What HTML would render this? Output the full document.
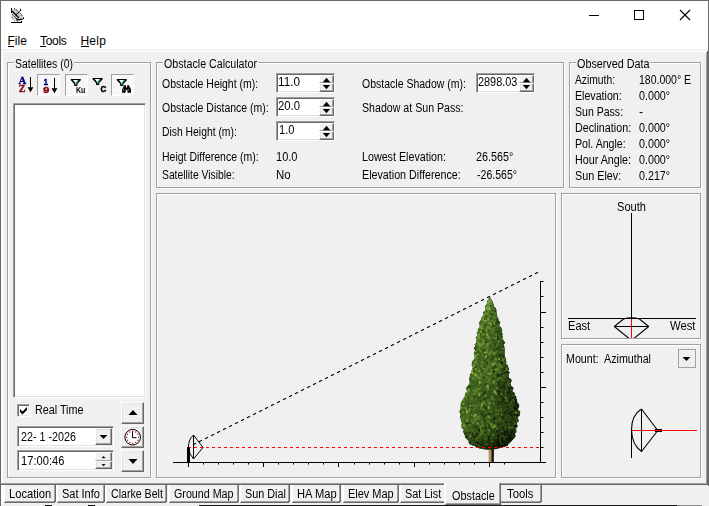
<!DOCTYPE html>
<html><head><meta charset="utf-8"><title>Obstacle</title>
<style>
html,body{margin:0;padding:0}
body{width:709px;height:506px;background:#f0f0f0;position:relative;overflow:hidden;font-family:"Liberation Sans",sans-serif;font-size:12px;color:#000}
.a{position:absolute}
.t{position:absolute;white-space:pre;line-height:20px;font-size:12px;transform-origin:0 0;display:block}
.m{position:absolute;white-space:pre;line-height:20px;font-size:12px;top:31px}
.etch{position:absolute;box-sizing:border-box;border:1px solid #a0a0a0;box-shadow:1px 1px 0 #fff, inset 1px 1px 0 #fff}
.cap{position:absolute;background:#f0f0f0;height:3px;top:61px}
.sunk{position:absolute;box-sizing:border-box;background:#fff;border:1px solid;border-color:#a0a0a0 #fff #fff #a0a0a0;box-shadow:inset 1px 1px 0 #696969, inset -1px -1px 0 #e3e3e3}
.btn{position:absolute;box-sizing:border-box;background:#f0f0f0;border:1px solid;border-color:#fff #696969 #696969 #fff;box-shadow:inset -1px -1px 0 #a0a0a0, inset 1px 1px 0 #e3e3e3}
.chk{position:absolute;box-sizing:border-box;border:1px solid;border-color:#a0a0a0 #fff #fff #a0a0a0;background:repeating-conic-gradient(#fff 0 25%,#f0f0f0 0 50%) 0 0/2px 2px}
.tab{position:absolute;box-sizing:border-box;top:485px;height:18px;background:#f0f0f0;border-left:2px solid #fff;border-right:1px solid #696969;border-bottom:1px solid #696969;box-shadow:inset -1px -1px 0 #a0a0a0}
svg{position:absolute;left:0;top:0;overflow:visible}
</style></head>
<body>
<!-- window chrome -->
<div class="a" style="left:0;top:0;width:709px;height:49px;background:#fff"></div>
<div class="a" style="left:0;top:0;width:709px;height:1px;background:#686868"></div>
<div class="a" style="left:0;top:1px;width:1px;height:505px;background:#686868"></div>
<div class="a" style="left:708px;top:1px;width:1px;height:485px;background:#686868"></div>
<div class="a" style="left:199px;top:505px;width:478px;height:1px;background:#1c1c1c"></div><div class="a" style="left:677px;top:505px;width:25px;height:1px;background:#8a8a8a"></div><div class="a" style="left:45px;top:505px;width:7px;height:1px;background:#111"></div><div class="a" style="left:88px;top:505px;width:7px;height:1px;background:#111"></div>

<!-- tab control frame -->
<div class="a" style="left:1px;top:51px;width:706px;height:1px;background:#fff"></div>
<div class="a" style="left:1px;top:51px;width:2px;height:454px;background:#fff"></div>
<div class="a" style="left:706px;top:52px;width:1px;height:432px;background:#a0a0a0"></div>
<div class="a" style="left:707px;top:51px;width:1px;height:434px;background:#696969"></div>
<div class="a" style="left:1px;top:483px;width:706px;height:1px;background:#a0a0a0"></div>
<div class="a" style="left:1px;top:484px;width:707px;height:1px;background:#696969"></div>

<!-- caption buttons -->
<svg width="709" height="506" viewBox="0 0 709 506" shape-rendering="crispEdges">
 <rect x="589" y="15" width="10" height="1" fill="#000"/>
 <rect x="634.5" y="10.5" width="9" height="9" fill="none" stroke="#000" stroke-width="1"/>
 <g shape-rendering="auto" stroke="#000" stroke-width="1.1"><path d="M680 10 L690 20 M690 10 L680 20" fill="none"/></g>
</svg>

<!-- app icon -->
<svg width="709" height="506" viewBox="0 0 709 506">
 <path d="M12 9.5 L15 8.6 L20.5 13 L24 18.2 L21.5 19.8 L17 19.6 L13.5 18.5 L11.5 15.5 Z" fill="#c4c4c4"/>
 <g stroke="#000" stroke-width="1" fill="none">
  <path d="M11.5 8 V13"/>
  <path d="M14 8.4 L19.8 12.2 M20.6 13.4 L23.8 18.2" stroke-dasharray="1.1 1.1"/>
  <path d="M12 11 L18.8 17.7" stroke-width="1.2"/>
  <path d="M12.4 14.4 L16.6 18.5 M11.4 16.8 L14.6 20.5" stroke-dasharray="1.2 0.9"/>
  <path d="M19.6 11.6 L15.6 15"/>
  <path d="M20.5 8.8 V11.2" stroke-width="1.1"/>
  <path d="M15.8 18.5 Q18 20.4 21 19.4 L23.8 18.4" stroke-width="1.3"/>
  <path d="M16.6 20 L17.6 21.6"/>
  <path d="M11 22.5 H22 M21.5 21 V22.5" stroke-width="1.2"/>
 </g>
 <circle cx="22.2" cy="17.7" r="0.9" fill="#fff"/>
</svg>

<!-- menu -->
<span class="m" style="left:7.5px">File</span>
<span class="m" style="left:40px;letter-spacing:-0.3px">Tools</span>
<span class="m" style="left:80.4px;letter-spacing:0.3px">Help</span>
<div class="a" style="left:8px;top:46px;width:6px;height:1px;background:#000"></div>
<div class="a" style="left:40px;top:46px;width:6px;height:1px;background:#000"></div>
<div class="a" style="left:81px;top:46px;width:8px;height:1px;background:#000"></div>

<!-- group boxes / panels -->
<div class="etch" style="left:7px;top:62px;width:144px;height:416px"></div>
<div class="etch" style="left:156px;top:62px;width:408px;height:126px"></div>
<div class="etch" style="left:569px;top:62px;width:132px;height:126px"></div>
<div class="etch" style="left:156px;top:193px;width:400px;height:285px"></div>
<div class="etch" style="left:561px;top:193px;width:140px;height:146px"></div>
<div class="etch" style="left:561px;top:344px;width:140px;height:134px"></div>
<div class="cap" style="left:14px;width:60px"></div>
<div class="cap" style="left:163px;width:95px"></div>
<div class="cap" style="left:576px;width:74px"></div>

<!-- toolbar -->
<div class="chk" style="left:37px;top:74px;width:23px;height:22px"></div>
<div class="chk" style="left:65px;top:74px;width:23px;height:22px"></div>
<div class="chk" style="left:111px;top:74px;width:23px;height:22px"></div>
<svg width="709" height="506" viewBox="0 0 709 506" style="transform:translateZ(0);will-change:transform">
 <!-- AZ -->
 <g font-family="Liberation Serif" font-weight="bold" font-size="11px" stroke-width="0.35">
  <text x="18.6" y="84" fill="#000080" stroke="#000080" textLength="7.8" lengthAdjust="spacingAndGlyphs">A</text>
  <text x="18.8" y="92.2" fill="#800000" stroke="#800000" textLength="6.8" lengthAdjust="spacingAndGlyphs">Z</text>
 </g>
 <g shape-rendering="crispEdges"><rect x="30" y="77" width="1" height="13" fill="#000"/></g>
 <path d="M27.6 87.2 L33.4 87.2 L30.5 92.2 Z" fill="#000"/>
 <!-- 19 -->
 <g font-family="Liberation Sans" font-weight="bold" font-size="9.7px" stroke-width="0.35">
  <text x="43.6" y="85" fill="#000080" stroke="#000080" textLength="4.6" lengthAdjust="spacingAndGlyphs">1</text>
  <text x="42.9" y="93.2" fill="#800000" stroke="#800000" textLength="6.4" lengthAdjust="spacingAndGlyphs">9</text>
 </g>
 <g shape-rendering="crispEdges"><rect x="54" y="78" width="1" height="13" fill="#000"/></g>
 <path d="M51.6 88.2 L57.4 88.2 L54.5 93.2 Z" fill="#000"/>
 <!-- funnel Ku -->
 <path d="M70.8 79.0 h10 v1.2 l-3.4 3.8 v2 h-3.2 v-2 l-3.4 -3.8 Z" fill="#000"/><path d="M73.0 80.1 h5.6 l-2.2 2.9 v1.5 h-1.2 v-1.5 Z" fill="#fff"/><path d="M78.2 80.4 L75.4 84.4" stroke="#009090" stroke-width="1.1" fill="none"/>
 <text x="76" y="92.8" font-family="Liberation Sans" font-weight="bold" font-size="8.5px" textLength="9.4" lengthAdjust="spacingAndGlyphs">Ku</text>
 <!-- funnel C -->
 <path d="M92.6 78.0 h10 v1.2 l-3.4 3.8 v2 h-3.2 v-2 l-3.4 -3.8 Z" fill="#000"/><path d="M94.8 79.1 h5.6 l-2.2 2.9 v1.5 h-1.2 v-1.5 Z" fill="#fff"/><path d="M100.0 79.4 L97.2 83.4" stroke="#009090" stroke-width="1.1" fill="none"/>
 <text x="100.6" y="92" font-family="Liberation Sans" font-weight="bold" font-size="8.6px" stroke="#000" stroke-width="0.5" textLength="5.8" lengthAdjust="spacingAndGlyphs">C</text>
 <!-- funnel binoculars -->
 <path d="M116.8 79.0 h10 v1.2 l-3.4 3.8 v2 h-3.2 v-2 l-3.4 -3.8 Z" fill="#000"/><path d="M119.0 80.1 h5.6 l-2.2 2.9 v1.5 h-1.2 v-1.5 Z" fill="#fff"/><path d="M124.2 80.4 L121.4 84.4" stroke="#009090" stroke-width="1.1" fill="none"/>
 <g fill="#000">
  <path d="M124.2 85.2 H126 V87.4 L125.5 92.8 H122.1 V89.4 L123.4 87 Z"/>
  <path d="M128.9 85.2 H127.1 V87.4 L127.6 92.8 H131 V89.4 L129.7 87 Z"/>
  <rect x="125.2" y="87.4" width="2.7" height="2.4"/>
 </g>
 <rect x="123.1" y="89.3" width="0.8" height="1" fill="#fff"/><rect x="128.3" y="89.3" width="0.8" height="1" fill="#fff"/>
</svg>

<!-- list box -->
<div class="sunk" style="left:13px;top:103px;width:133px;height:295px"></div>

<!-- checkbox -->
<div class="sunk" style="left:17px;top:404px;width:13px;height:13px"></div>
<svg width="709" height="506" viewBox="0 0 709 506"><path d="M20 409 L22.5 411.5 L27 407 V410 L22.5 414.5 L20 412 Z" fill="#000"/></svg>

<!-- date / time -->
<div class="sunk" style="left:17px;top:426px;width:97px;height:21px"></div>
<div class="btn" style="left:95px;top:428px;width:17px;height:17px"></div>
<div class="sunk" style="left:17px;top:450px;width:97px;height:21px"></div>
<div class="btn" style="left:95px;top:452px;width:17px;height:9px;border-bottom-color:#a0a0a0;box-shadow:inset -1px 0 0 #a0a0a0"></div>
<div class="btn" style="left:95px;top:461px;width:17px;height:8px"></div>
<div class="btn" style="left:121px;top:402px;width:23px;height:22px"></div>
<div class="btn" style="left:121px;top:426px;width:23px;height:22px"></div>
<div class="btn" style="left:121px;top:450px;width:23px;height:22px"></div>
<svg width="709" height="506" viewBox="0 0 709 506">
 <path d="M99.5 435 L107.5 435 L103.5 439 Z" fill="#000"/>
 <path d="M101.5 458.2 L105.5 458.2 L103.5 456 Z" fill="#000"/>
 <path d="M101.5 464 L105.5 464 L103.5 466.2 Z" fill="#000"/>
 <path d="M128.5 415 L137.5 415 L133 410 Z" fill="#000"/>
 <path d="M128.5 459 L137.5 459 L133 464 Z" fill="#000"/>
 <circle cx="132.7" cy="437.2" r="7.8" fill="#fff" stroke="#000" stroke-width="1"/>
 <g fill="#b80000">
  <circle cx="132.7" cy="431.2" r="0.7"/><circle cx="135.7" cy="432" r="0.7"/><circle cx="137.9" cy="434.2" r="0.7"/>
  <circle cx="138.7" cy="437.2" r="0.7"/><circle cx="137.9" cy="440.2" r="0.7"/><circle cx="135.7" cy="442.4" r="0.7"/>
  <circle cx="132.7" cy="443.2" r="0.7"/><circle cx="129.7" cy="442.4" r="0.7"/><circle cx="127.5" cy="440.2" r="0.7"/>
  <circle cx="126.7" cy="437.2" r="0.7"/><circle cx="127.5" cy="434.2" r="0.7"/><circle cx="129.7" cy="432" r="0.7"/>
 </g>
 <path d="M132.5 431.5 L132.5 437.7 L136.5 437.7" fill="none" stroke="#000" stroke-width="1"/>
</svg>

<!-- spin boxes -->
<div class="sunk" style="left:276px;top:73px;width:59px;height:20px"></div>
<div class="sunk" style="left:276px;top:97px;width:59px;height:20px"></div>
<div class="sunk" style="left:276px;top:121px;width:59px;height:20px"></div>
<div class="sunk" style="left:476px;top:73px;width:59px;height:20px"></div>
<div class="btn" style="left:319px;top:75px;width:15px;height:8px;border-bottom-color:#a0a0a0;box-shadow:inset -1px 0 0 #a0a0a0"></div>
<div class="btn" style="left:319px;top:83px;width:15px;height:9px"></div>
<svg width="709" height="506" viewBox="0 0 709 506"><path d="M322.8 82.2 L330.2 82.2 L326.5 77.8 Z" fill="#000"/><path d="M322.8 85.0 L330.2 85.0 L326.5 89.2 Z" fill="#000"/></svg>
<div class="btn" style="left:319px;top:99px;width:15px;height:8px;border-bottom-color:#a0a0a0;box-shadow:inset -1px 0 0 #a0a0a0"></div>
<div class="btn" style="left:319px;top:107px;width:15px;height:9px"></div>
<svg width="709" height="506" viewBox="0 0 709 506"><path d="M322.8 106.2 L330.2 106.2 L326.5 101.8 Z" fill="#000"/><path d="M322.8 109.0 L330.2 109.0 L326.5 113.2 Z" fill="#000"/></svg>
<div class="btn" style="left:319px;top:123px;width:15px;height:8px;border-bottom-color:#a0a0a0;box-shadow:inset -1px 0 0 #a0a0a0"></div>
<div class="btn" style="left:319px;top:131px;width:15px;height:9px"></div>
<svg width="709" height="506" viewBox="0 0 709 506"><path d="M322.8 130.2 L330.2 130.2 L326.5 125.8 Z" fill="#000"/><path d="M322.8 133.0 L330.2 133.0 L326.5 137.2 Z" fill="#000"/></svg>
<div class="btn" style="left:519px;top:75px;width:15px;height:8px;border-bottom-color:#a0a0a0;box-shadow:inset -1px 0 0 #a0a0a0"></div>
<div class="btn" style="left:519px;top:83px;width:15px;height:9px"></div>
<svg width="709" height="506" viewBox="0 0 709 506"><path d="M522.8 82.2 L530.2 82.2 L526.5 77.8 Z" fill="#000"/><path d="M522.8 85.0 L530.2 85.0 L526.5 89.2 Z" fill="#000"/></svg>

<!-- mount dropdown -->
<div class="a" style="left:678px;top:349px;width:18px;height:19px;box-sizing:border-box;border:1px solid #a0a0a0;background:#f0f0f0"></div>
<svg width="709" height="506" viewBox="0 0 709 506"><path d="M682.5 357 L690.5 357 L686.5 361 Z" fill="#000"/></svg>

<!-- drawing -->
<svg width="709" height="506" viewBox="0 0 709 506">
<g shape-rendering="crispEdges" fill="#000">
<rect x="173" y="462" width="373" height="1"/>
<rect x="188" y="463" width="1" height="4"/>
<rect x="263" y="463" width="1" height="4"/>
<rect x="338" y="463" width="1" height="4"/>
<rect x="414" y="463" width="1" height="4"/>
<rect x="489" y="463" width="1" height="4"/>
<rect x="540" y="281" width="1" height="182"/>
<rect x="541" y="462" width="5" height="1"/>
<rect x="541" y="387" width="5" height="1"/>
<rect x="541" y="312" width="5" height="1"/>
<rect x="187" y="447" width="3" height="15"/>
</g>
<g fill="#000"><rect x="203" y="463" width="1" height="1.5"/><rect x="218" y="463" width="1" height="1.5"/><rect x="233" y="463" width="1" height="1.5"/><rect x="248" y="463" width="1" height="1.5"/><rect x="278" y="463" width="1" height="1.5"/><rect x="293" y="463" width="1" height="1.5"/><rect x="308" y="463" width="1" height="1.5"/><rect x="323" y="463" width="1" height="1.5"/><rect x="354" y="463" width="1" height="1.5"/><rect x="369" y="463" width="1" height="1.5"/><rect x="384" y="463" width="1" height="1.5"/><rect x="399" y="463" width="1" height="1.5"/><rect x="429" y="463" width="1" height="1.5"/><rect x="444" y="463" width="1" height="1.5"/><rect x="459" y="463" width="1" height="1.5"/><rect x="474" y="463" width="1" height="1.5"/><rect x="504" y="463" width="1" height="1.5"/><rect x="541" y="447" width="2.5" height="1"/><rect x="541" y="432" width="2.5" height="1"/><rect x="541" y="417" width="2.5" height="1"/><rect x="541" y="402" width="2.5" height="1"/><rect x="541" y="372" width="2.5" height="1"/><rect x="541" y="357" width="2.5" height="1"/><rect x="541" y="342" width="2.5" height="1"/><rect x="541" y="327" width="2.5" height="1"/><rect x="541" y="296" width="2.5" height="1"/><rect x="541" y="281" width="2.5" height="1"/></g>
<defs><clipPath id="tc"><path d="M489.5 296.8 L488.8 298.5 L487.8 300.4 L487.0 302.7 L486.9 304.6 L484.6 306.6 L485.9 308.1 L485.4 310.2 L483.0 312.5 L484.2 313.9 L483.4 315.2 L482.3 316.4 L481.5 318.6 L480.5 320.4 L479.2 322.0 L479.3 324.2 L480.0 325.7 L479.2 327.8 L477.3 329.4 L479.0 330.6 L476.5 332.4 L477.1 333.7 L478.0 335.2 L475.6 337.6 L476.8 339.1 L476.2 341.2 L475.9 343.0 L474.6 344.3 L475.5 346.0 L473.7 348.4 L475.1 350.7 L473.9 352.9 L474.9 355.3 L474.3 357.4 L474.7 358.7 L473.1 360.2 L471.9 361.9 L471.8 363.8 L471.4 365.2 L473.0 366.7 L472.5 369.0 L471.0 371.3 L472.1 372.6 L470.0 374.1 L469.8 376.3 L469.1 377.7 L469.2 379.2 L469.4 381.1 L469.7 382.5 L469.2 384.3 L467.4 385.9 L466.2 387.6 L466.2 389.5 L467.5 390.9 L465.2 393.2 L465.0 394.4 L464.9 396.5 L463.8 397.8 L462.4 400.1 L461.0 402.2 L460.5 404.3 L460.5 406.0 L460.6 407.8 L460.2 409.7 L458.9 411.7 L460.6 413.8 L460.6 415.7 L459.9 417.0 L460.8 418.9 L461.0 420.9 L462.1 423.2 L461.4 424.8 L461.2 426.2 L461.7 427.9 L464.0 429.9 L462.8 432.1 L464.2 433.8 L464.9 435.1 L465.0 437.3 L466.9 438.9 L468.0 440.4 L468.8 442.4 L469.9 444.6 L474.7 445.9 L475.7 447.1 L480.2 448.7 L486.8 449.5 L492.8 449.5 L497.3 448.7 L503.5 447.1 L507.1 445.9 L508.4 444.6 L510.3 442.4 L512.1 440.4 L513.4 438.9 L515.2 437.3 L515.6 435.1 L514.7 433.8 L516.7 432.1 L516.2 429.9 L516.5 427.9 L517.8 426.2 L517.0 424.8 L516.9 423.2 L518.9 420.9 L518.1 418.9 L517.8 417.0 L520.0 415.7 L519.9 413.8 L520.4 411.7 L518.0 409.7 L518.4 407.8 L519.3 406.0 L519.0 404.3 L517.1 402.2 L517.1 400.1 L516.3 397.8 L516.4 396.5 L514.2 394.4 L515.1 393.2 L512.0 390.9 L513.1 389.5 L513.6 387.6 L511.0 385.9 L510.7 384.3 L510.5 382.5 L511.9 381.1 L511.2 379.2 L508.8 377.7 L509.0 376.3 L508.4 374.1 L509.9 372.6 L508.2 371.3 L509.1 369.0 L508.1 366.7 L508.0 365.2 L506.0 363.8 L506.5 361.9 L505.9 360.2 L506.2 358.7 L505.2 357.4 L504.8 355.3 L504.3 352.9 L505.0 350.7 L504.6 348.4 L504.3 346.0 L503.6 344.3 L505.1 343.0 L504.4 341.2 L502.7 339.1 L502.4 337.6 L502.2 335.2 L502.9 333.7 L501.6 332.4 L502.4 330.6 L502.0 329.4 L501.5 327.8 L499.0 325.7 L499.3 324.2 L500.4 322.0 L498.5 320.4 L498.5 318.6 L497.3 316.4 L496.4 315.2 L496.7 313.9 L496.5 312.5 L496.7 310.2 L495.6 308.1 L493.2 306.6 L493.6 304.6 L492.7 302.7 L491.8 300.4 L490.8 298.5 L490.1 296.8 Z"/></clipPath><linearGradient id="tg" x1="0" y1="0" x2="1" y2="0.25"><stop offset="0" stop-color="#48691f"/><stop offset="0.5" stop-color="#3b5a1b"/><stop offset="1" stop-color="#263c12"/></linearGradient><linearGradient id="tk" x1="0" y1="0" x2="1" y2="0"><stop offset="0" stop-color="#c2a676"/><stop offset="0.5" stop-color="#a8895a"/><stop offset="0.62" stop-color="#1c160e"/><stop offset="1" stop-color="#0e0c08"/></linearGradient></defs><path d="M488.4 436 L494 436 L493.8 462 L488.6 462 Z" fill="url(#tk)"/><path d="M489.5 296.8 L488.8 298.5 L487.8 300.4 L487.0 302.7 L486.9 304.6 L484.6 306.6 L485.9 308.1 L485.4 310.2 L483.0 312.5 L484.2 313.9 L483.4 315.2 L482.3 316.4 L481.5 318.6 L480.5 320.4 L479.2 322.0 L479.3 324.2 L480.0 325.7 L479.2 327.8 L477.3 329.4 L479.0 330.6 L476.5 332.4 L477.1 333.7 L478.0 335.2 L475.6 337.6 L476.8 339.1 L476.2 341.2 L475.9 343.0 L474.6 344.3 L475.5 346.0 L473.7 348.4 L475.1 350.7 L473.9 352.9 L474.9 355.3 L474.3 357.4 L474.7 358.7 L473.1 360.2 L471.9 361.9 L471.8 363.8 L471.4 365.2 L473.0 366.7 L472.5 369.0 L471.0 371.3 L472.1 372.6 L470.0 374.1 L469.8 376.3 L469.1 377.7 L469.2 379.2 L469.4 381.1 L469.7 382.5 L469.2 384.3 L467.4 385.9 L466.2 387.6 L466.2 389.5 L467.5 390.9 L465.2 393.2 L465.0 394.4 L464.9 396.5 L463.8 397.8 L462.4 400.1 L461.0 402.2 L460.5 404.3 L460.5 406.0 L460.6 407.8 L460.2 409.7 L458.9 411.7 L460.6 413.8 L460.6 415.7 L459.9 417.0 L460.8 418.9 L461.0 420.9 L462.1 423.2 L461.4 424.8 L461.2 426.2 L461.7 427.9 L464.0 429.9 L462.8 432.1 L464.2 433.8 L464.9 435.1 L465.0 437.3 L466.9 438.9 L468.0 440.4 L468.8 442.4 L469.9 444.6 L474.7 445.9 L475.7 447.1 L480.2 448.7 L486.8 449.5 L492.8 449.5 L497.3 448.7 L503.5 447.1 L507.1 445.9 L508.4 444.6 L510.3 442.4 L512.1 440.4 L513.4 438.9 L515.2 437.3 L515.6 435.1 L514.7 433.8 L516.7 432.1 L516.2 429.9 L516.5 427.9 L517.8 426.2 L517.0 424.8 L516.9 423.2 L518.9 420.9 L518.1 418.9 L517.8 417.0 L520.0 415.7 L519.9 413.8 L520.4 411.7 L518.0 409.7 L518.4 407.8 L519.3 406.0 L519.0 404.3 L517.1 402.2 L517.1 400.1 L516.3 397.8 L516.4 396.5 L514.2 394.4 L515.1 393.2 L512.0 390.9 L513.1 389.5 L513.6 387.6 L511.0 385.9 L510.7 384.3 L510.5 382.5 L511.9 381.1 L511.2 379.2 L508.8 377.7 L509.0 376.3 L508.4 374.1 L509.9 372.6 L508.2 371.3 L509.1 369.0 L508.1 366.7 L508.0 365.2 L506.0 363.8 L506.5 361.9 L505.9 360.2 L506.2 358.7 L505.2 357.4 L504.8 355.3 L504.3 352.9 L505.0 350.7 L504.6 348.4 L504.3 346.0 L503.6 344.3 L505.1 343.0 L504.4 341.2 L502.7 339.1 L502.4 337.6 L502.2 335.2 L502.9 333.7 L501.6 332.4 L502.4 330.6 L502.0 329.4 L501.5 327.8 L499.0 325.7 L499.3 324.2 L500.4 322.0 L498.5 320.4 L498.5 318.6 L497.3 316.4 L496.4 315.2 L496.7 313.9 L496.5 312.5 L496.7 310.2 L495.6 308.1 L493.2 306.6 L493.6 304.6 L492.7 302.7 L491.8 300.4 L490.8 298.5 L490.1 296.8 Z" fill="url(#tg)"/><g clip-path="url(#tc)"><path fill="#0c1607" d="M477.6 445.1h1v3h-1zM508.6 391.0h2v3h-2zM474.2 395.6h1v1.5h-1zM506.7 433.9h2v3h-2zM496.7 403.9h1.5v1h-1.5zM493.3 306.1h2v2.5h-2zM497.4 365.8h2v1.5h-2zM505.1 412.9h1v2h-1zM490.7 448.5h2.5v1h-2.5zM502.9 354.8h2v3h-2zM500.6 446.1h2v2.5h-2zM498.1 393.6h1.5v2h-1.5zM503.6 431.3h2v3h-2zM502.6 378.9h2.5v1.5h-2.5zM494.6 442.9h2.5v2h-2.5zM509.2 436.7h2v1.5h-2zM499.9 338.6h2v1.5h-2zM487.7 426.4h2.5v1h-2.5zM502.0 440.1h2.5v2h-2.5zM510.6 428.5h2v3h-2zM498.7 336.2h2.5v2h-2.5zM498.5 445.3h1v2h-1zM492.7 447.3h1.5v3h-1.5zM497.1 319.0h1v2h-1zM503.2 387.7h2v1h-2zM509.6 410.7h2v3h-2zM492.7 441.4h2.5v3h-2.5zM508.7 424.1h2.5v1h-2.5zM511.7 438.3h2v1.5h-2zM497.9 367.2h2v1h-2zM503.3 395.9h2.5v3h-2.5zM512.9 426.6h1.5v2.5h-1.5zM513.0 406.2h1v2h-1zM488.4 307.8h2v1h-2zM511.2 421.0h2v1h-2zM507.5 423.7h1.5v3h-1.5zM487.6 301.6h2.5v2.5h-2.5zM488.0 438.4h2v2h-2zM496.1 313.1h1.5v2.5h-1.5zM479.7 446.9h2v1h-2zM505.7 443.1h1v2.5h-1zM510.9 437.5h2v1.5h-2zM505.7 444.9h2.5v1h-2.5zM514.3 416.3h2v2h-2zM497.0 442.2h2v1h-2zM506.5 439.1h2.5v3h-2.5zM490.4 447.3h1v3h-1zM496.5 443.0h2.5v1h-2.5zM490.4 303.7h1v3h-1zM500.6 437.6h2.5v3h-2.5zM485.5 414.7h1.5v2.5h-1.5zM482.4 441.9h2.5v1h-2.5zM488.4 371.0h2v2h-2zM498.4 378.6h2.5v3h-2.5zM514.8 407.4h2v1.5h-2zM509.2 381.2h2v2h-2zM481.4 333.9h2v2h-2zM504.1 443.9h1v2.5h-1zM470.3 440.5h1.5v1h-1.5zM499.7 347.3h2v3h-2zM513.3 418.6h2.5v3h-2.5zM498.8 444.9h2v1h-2zM505.3 381.0h1.5v1h-1.5zM507.9 381.4h2v3h-2zM513.2 406.5h2.5v1h-2.5zM509.0 400.1h2v2.5h-2zM497.1 429.5h2v2.5h-2zM514.2 418.8h2v2h-2zM496.8 435.4h1.5v1.5h-1.5zM491.4 430.7h2.5v1.5h-2.5zM503.4 433.2h2.5v1.5h-2.5zM516.0 413.4h2v3h-2zM499.6 368.7h1v1.5h-1zM504.2 421.5h2v1h-2zM477.0 441.9h2v2.5h-2zM508.6 439.2h2.5v1.5h-2.5zM500.7 446.8h1v1.5h-1zM493.4 441.6h1.5v1.5h-1.5zM501.4 336.1h1.5v1.5h-1.5zM502.4 427.8h1v2h-1zM466.2 421.2h2v3h-2zM510.9 431.2h2v2h-2zM483.2 447.1h2.5v2.5h-2.5zM511.8 429.8h1v3h-1zM471.9 440.5h2v1h-2zM494.2 318.0h2.5v1.5h-2.5zM512.7 420.6h2.5v3h-2.5zM492.0 439.4h2v2.5h-2zM508.3 421.6h1.5v3h-1.5zM479.5 439.7h2v2.5h-2zM506.4 371.6h2.5v1h-2.5zM497.8 434.2h1.5v2.5h-1.5zM488.3 413.1h2v2h-2zM498.0 445.4h2.5v3h-2.5zM480.4 374.9h1.5v2h-1.5zM513.4 433.6h1v1.5h-1zM508.8 382.7h1v3h-1zM485.2 447.5h2.5v1.5h-2.5zM515.9 400.0h1.5v1.5h-1.5zM497.0 440.7h1.5v2h-1.5zM503.0 392.1h1v3h-1zM488.3 436.2h1.5v2h-1.5zM509.7 437.8h2v3h-2zM504.2 442.7h2.5v1h-2.5zM503.4 441.7h2v1.5h-2zM496.9 443.0h2v1h-2zM495.3 410.2h1v1.5h-1zM507.4 372.4h2v3h-2zM513.2 434.7h2v2h-2zM494.5 318.9h1v3h-1zM488.9 434.9h2.5v1h-2.5zM497.0 374.2h1.5v3h-1.5zM492.9 446.6h2v3h-2zM505.6 407.2h2v2.5h-2zM496.7 317.5h2v1h-2zM503.2 407.5h1v2.5h-1zM502.7 445.3h1.5v1h-1.5zM504.8 444.1h2v2h-2zM510.4 440.9h1.5v1h-1.5zM515.0 407.3h1v3h-1zM500.7 415.3h2v3h-2zM486.1 439.0h1v1h-1zM517.6 406.7h2v1.5h-2zM496.6 442.2h2.5v3h-2.5zM486.9 357.9h2.5v1h-2.5zM513.6 423.6h1v1h-1zM514.9 396.6h1v3h-1zM510.4 413.4h2v2.5h-2zM508.5 436.6h1v1h-1zM506.9 382.6h2v2h-2zM495.1 445.0h1.5v2h-1.5zM508.8 437.8h2.5v1.5h-2.5zM504.2 352.3h2v1.5h-2zM487.8 446.2h2v2h-2zM493.7 446.4h2v1.5h-2zM497.4 447.2h1.5v1.5h-1.5zM514.7 425.6h2.5v1h-2.5zM477.9 442.2h2v2h-2zM495.1 446.0h1v2h-1zM491.3 301.0h2v3h-2zM502.5 397.9h2v1.5h-2zM492.0 332.6h1v1.5h-1zM485.9 446.3h2.5v2h-2.5zM498.8 444.3h2.5v3h-2.5zM481.9 446.8h1v2.5h-1zM508.0 440.1h2v1.5h-2zM503.9 368.6h2v2.5h-2zM505.2 437.9h1v2h-1zM491.8 301.5h2v2h-2zM479.9 395.5h2.5v1h-2.5zM497.6 400.9h2.5v1.5h-2.5zM496.1 347.2h1.5v3h-1.5zM491.9 448.4h1v1h-1zM497.6 441.4h1v1.5h-1zM479.7 443.9h2v2h-2zM510.9 432.5h2v1.5h-2zM512.2 408.4h2v1.5h-2zM489.9 442.1h2.5v3h-2.5zM500.3 444.7h1v1.5h-1zM495.7 320.7h2v3h-2zM507.4 442.0h1v3h-1zM483.4 391.1h2v2.5h-2zM504.6 435.1h1v1h-1zM504.5 443.7h1v3h-1zM497.6 390.6h1v2h-1zM493.2 446.3h1.5v2h-1.5zM513.4 426.7h1v1.5h-1zM486.4 447.8h2v1h-2zM471.7 444.4h2v2h-2zM496.9 434.6h2v2.5h-2zM473.7 435.5h2v2.5h-2zM493.9 306.6h1.5v1h-1.5zM509.7 418.2h1v1.5h-1zM501.6 446.7h1.5v1.5h-1.5zM480.2 441.1h2.5v2.5h-2.5zM492.4 444.3h2.5v2h-2.5zM507.7 406.9h2v1.5h-2zM501.9 408.4h1.5v1h-1.5zM502.7 381.7h2.5v1.5h-2.5zM493.6 445.1h2.5v2.5h-2.5zM515.0 414.0h1v1h-1zM514.3 415.7h2v3h-2zM499.0 442.2h2v1h-2zM509.6 437.5h1v1h-1zM486.2 439.7h2v3h-2zM516.2 404.1h2.5v2h-2.5zM514.3 406.0h1v3h-1zM506.1 439.7h1.5v2.5h-1.5zM491.9 308.9h2v3h-2zM511.2 390.5h2v2.5h-2zM506.2 431.0h2.5v2.5h-2.5zM510.2 383.9h2.5v2h-2.5zM496.8 322.5h2.5v1h-2.5zM475.4 433.1h2.5v1.5h-2.5zM491.5 447.1h2.5v2.5h-2.5zM505.2 430.3h2.5v1.5h-2.5zM510.4 392.3h1.5v1.5h-1.5zM508.6 386.5h2v3h-2zM513.5 435.0h1v1.5h-1zM495.2 344.7h2v2.5h-2zM509.2 438.7h1.5v1.5h-1.5zM503.7 441.6h2.5v3h-2.5zM516.3 408.7h1.5v1.5h-1.5zM482.9 446.0h2.5v1h-2.5zM492.5 446.5h2v1h-2zM501.4 444.4h2v3h-2zM510.5 423.5h1.5v2.5h-1.5zM484.0 437.9h2v3h-2zM507.7 434.4h2v1h-2zM515.7 399.2h2v2.5h-2zM482.1 442.7h2.5v2.5h-2.5zM501.9 441.9h2v1h-2zM487.8 446.8h2v1h-2zM513.7 416.7h1v2.5h-1zM516.2 400.3h1.5v3h-1.5zM495.8 444.3h2v2h-2zM477.8 429.1h2v2.5h-2zM488.5 354.3h2v2h-2zM491.4 304.3h2v3h-2zM488.0 356.1h2.5v2.5h-2.5zM504.4 432.7h1.5v3h-1.5zM498.2 428.8h1v2h-1zM510.1 434.6h2v1.5h-2zM498.4 441.3h1.5v3h-1.5zM510.1 433.5h1v1.5h-1zM502.3 393.1h2.5v2h-2.5zM497.3 430.5h2v2h-2zM500.3 432.7h1v2h-1zM497.2 343.4h2v2.5h-2zM486.2 447.5h1v2.5h-1zM488.6 443.8h2v3h-2zM500.9 336.5h1.5v1.5h-1.5zM500.3 361.6h2v2.5h-2zM500.4 446.5h1v1h-1zM486.1 445.8h1v2.5h-1zM488.9 434.4h1.5v2.5h-1.5zM512.8 392.9h2v2.5h-2zM506.4 432.7h2v1.5h-2zM508.5 434.8h2v2.5h-2zM503.2 445.5h1.5v2.5h-1.5zM487.0 447.3h2.5v2.5h-2.5zM488.9 445.9h2.5v1.5h-2.5zM474.1 443.9h2v2.5h-2zM480.5 406.9h1v1h-1zM507.2 439.2h2v1.5h-2zM482.4 445.7h1v1h-1zM498.6 324.0h1.5v2.5h-1.5zM493.2 444.1h1v1.5h-1zM471.6 443.9h2v2h-2zM505.4 438.3h2.5v2h-2.5zM496.3 436.8h2.5v2.5h-2.5zM508.2 387.8h1v3h-1zM513.7 424.7h2v2h-2zM510.4 385.6h2v3h-2zM479.9 439.6h1v3h-1zM479.7 439.7h2v2.5h-2zM504.8 376.0h1v2.5h-1zM507.4 437.3h2v3h-2zM501.8 335.9h1v2h-1zM479.3 439.5h2v1h-2zM498.6 428.8h1v2h-1zM497.0 445.1h2v1.5h-2zM504.9 418.2h1.5v3h-1.5zM496.1 429.7h1.5v3h-1.5zM511.7 396.5h2v2h-2zM492.4 397.4h2v2h-2zM494.7 312.0h1.5v3h-1.5zM499.2 357.3h2v3h-2zM466.5 436.8h2v2h-2zM511.3 430.6h2.5v2.5h-2.5zM483.1 393.0h1v1.5h-1zM496.3 439.4h2.5v2.5h-2.5zM492.5 305.6h1v2.5h-1zM509.7 394.3h2v1h-2zM490.8 441.6h2v1.5h-2zM492.1 447.2h2v2h-2zM506.9 400.3h2.5v1.5h-2.5zM495.6 447.4h1.5v2h-1.5zM495.5 404.3h1.5v1.5h-1.5zM495.6 440.7h2.5v2.5h-2.5zM477.0 445.8h1.5v2h-1.5zM479.0 447.6h1v1h-1zM498.8 339.0h2v3h-2zM500.7 437.8h2.5v3h-2.5zM495.5 444.1h2.5v2h-2.5zM506.4 417.9h2v2h-2zM486.1 447.5h1.5v2.5h-1.5zM500.9 400.6h2v2h-2zM515.1 401.1h2.5v3h-2.5zM494.6 428.2h2v3h-2zM512.4 398.9h1.5v1h-1.5zM495.2 317.5h2v3h-2zM494.3 447.8h2.5v2h-2.5zM501.0 440.6h1v3h-1zM474.6 441.9h1v3h-1zM513.9 432.7h1v3h-1zM497.5 438.7h1.5v2.5h-1.5zM499.3 446.8h1v1.5h-1zM489.4 442.2h1.5v2h-1.5zM515.7 424.6h2v1h-2zM490.8 446.8h2v3h-2zM474.0 435.8h2v2h-2zM481.2 438.8h2v1h-2zM496.1 382.7h2.5v1.5h-2.5zM500.2 427.7h1v3h-1zM506.2 381.7h1.5v1h-1.5zM501.0 437.8h2v1h-2zM492.8 303.1h1v1h-1zM502.5 362.5h1.5v2h-1.5zM475.7 440.9h2v1.5h-2zM513.8 413.9h1v1.5h-1zM503.3 445.8h2.5v1.5h-2.5zM493.3 417.6h2v2.5h-2z"/><path fill="#15240a" d="M489.7 432.7h2v2.5h-2zM490.9 426.9h1.5v3h-1.5zM485.8 378.4h1v2.5h-1zM502.1 432.0h1v3h-1zM508.8 377.3h2.5v1.5h-2.5zM499.5 391.1h2.5v2h-2.5zM494.8 439.4h1.5v2.5h-1.5zM482.3 437.5h1.5v1.5h-1.5zM485.6 309.4h2v1h-2zM506.6 402.0h2.5v2h-2.5zM504.2 366.9h2.5v1.5h-2.5zM490.8 422.8h2v2.5h-2zM501.4 344.1h2v1h-2zM511.9 437.4h2.5v1h-2.5zM502.3 442.6h1.5v2h-1.5zM500.5 373.6h2v2h-2zM498.8 321.0h1v1.5h-1zM495.3 355.5h1.5v2.5h-1.5zM468.1 441.8h2.5v2h-2.5zM510.2 382.1h2v1h-2zM471.0 402.2h1.5v1.5h-1.5zM502.1 401.7h2v1.5h-2zM476.9 362.4h2v2h-2zM497.4 320.9h2.5v1h-2.5zM485.7 446.5h1.5v3h-1.5zM502.1 426.5h1.5v3h-1.5zM500.6 344.2h1v1h-1zM508.1 439.9h1v3h-1zM492.0 370.4h2.5v3h-2.5zM513.6 429.8h1.5v1.5h-1.5zM490.2 376.6h2.5v2h-2.5zM485.3 321.7h2.5v1h-2.5zM496.0 330.7h2v1h-2zM483.3 396.8h2.5v2.5h-2.5zM512.8 393.8h1v2h-1zM499.5 336.0h2.5v1h-2.5zM488.3 440.1h2v1.5h-2zM499.2 341.1h1.5v1.5h-1.5zM505.5 401.0h1.5v1h-1.5zM477.6 420.5h1.5v1h-1.5zM465.0 435.6h2.5v2.5h-2.5zM496.2 438.1h1v1.5h-1zM503.1 402.1h2.5v1.5h-2.5zM498.9 410.6h2v1h-2zM491.1 302.6h2.5v1.5h-2.5zM488.0 361.3h2v3h-2zM496.8 335.6h2v2.5h-2zM483.8 329.6h2.5v1h-2.5zM509.3 378.2h1v2.5h-1zM511.5 389.0h2.5v2h-2.5zM512.8 418.1h1v3h-1zM506.3 392.3h2.5v1h-2.5zM497.4 424.0h2.5v1.5h-2.5zM487.3 362.8h2.5v3h-2.5zM493.6 346.3h2v2.5h-2zM490.4 300.6h2v3h-2zM500.7 400.7h1.5v1.5h-1.5zM505.6 380.6h2v1h-2zM483.6 365.7h2v1h-2zM493.4 439.1h1.5v2.5h-1.5zM503.6 430.2h2v1h-2zM504.5 409.8h2.5v2h-2.5zM472.7 370.0h2v2.5h-2zM484.9 385.0h2v1.5h-2zM493.1 322.9h2.5v1.5h-2.5zM496.5 338.6h2v1.5h-2zM493.1 310.5h2v3h-2zM503.5 371.7h2.5v1.5h-2.5zM507.5 371.5h2.5v3h-2.5zM498.9 337.2h2.5v1.5h-2.5zM487.8 384.6h2v1.5h-2zM507.2 412.7h2v2.5h-2zM479.9 437.9h2.5v2.5h-2.5zM504.5 376.5h1v2.5h-1zM490.2 439.6h1.5v1.5h-1.5zM494.0 446.6h2v2h-2zM506.2 407.7h2.5v3h-2.5zM512.9 398.4h2.5v2.5h-2.5zM501.0 372.4h1v2h-1zM507.0 377.9h2v1.5h-2zM471.7 432.1h1.5v3h-1.5zM497.7 429.2h1v2h-1zM491.0 409.7h1.5v2.5h-1.5zM485.3 325.9h1v1h-1zM503.9 358.4h2.5v2h-2.5zM501.8 416.4h2v2h-2zM505.7 419.7h1v3h-1zM494.4 312.2h2v2h-2zM491.1 440.8h2.5v1h-2.5zM508.1 419.1h2v1h-2zM489.7 328.8h2v1h-2zM501.4 335.7h2v2h-2zM487.2 315.9h1v2.5h-1zM499.3 402.0h1v3h-1zM485.4 342.9h1.5v1h-1.5zM474.8 432.2h2.5v1h-2.5zM489.3 314.9h2v2h-2zM484.3 446.6h1.5v2h-1.5zM472.7 425.7h2.5v2h-2.5zM490.6 311.4h2.5v3h-2.5zM496.3 325.2h2.5v2.5h-2.5zM517.4 405.4h2v2.5h-2zM497.3 374.1h2.5v1h-2.5zM501.1 400.5h1.5v1.5h-1.5zM480.8 338.7h2.5v1.5h-2.5zM498.6 353.0h1v3h-1zM493.8 330.1h2v2h-2zM500.4 396.6h1.5v1h-1.5zM490.3 299.9h2v2.5h-2zM483.8 325.1h2.5v2h-2.5zM492.6 442.5h2v2h-2zM507.5 434.1h2v3h-2zM499.6 364.2h2v1.5h-2zM506.9 433.6h2v1h-2zM482.7 325.4h2v2h-2zM488.6 415.3h2.5v3h-2.5zM480.2 431.8h1.5v1h-1.5zM486.3 342.7h2v3h-2zM473.2 435.3h2v2h-2zM499.0 355.7h2v1h-2zM491.1 317.6h2v1h-2zM493.0 305.6h2.5v3h-2.5zM499.7 432.8h1.5v1h-1.5zM506.6 427.4h2v2.5h-2zM492.2 309.4h1.5v2.5h-1.5zM505.1 420.9h2v1.5h-2zM503.2 380.2h2.5v1.5h-2.5zM493.6 337.2h2v3h-2zM501.0 382.6h2v2h-2zM497.2 328.4h2v1.5h-2zM501.0 348.3h2.5v3h-2.5zM493.5 330.9h2v3h-2zM483.7 353.6h1v2.5h-1zM504.9 418.8h2v1.5h-2zM490.7 305.4h1.5v3h-1.5zM506.0 405.7h1.5v3h-1.5zM493.1 431.9h2.5v2.5h-2.5zM464.1 433.1h1v2.5h-1zM513.6 417.3h2v2.5h-2zM497.5 409.3h2.5v2h-2.5zM504.3 355.4h1.5v1.5h-1.5zM496.0 385.7h2v1.5h-2zM498.3 340.3h2v3h-2zM497.8 391.8h1.5v3h-1.5zM500.0 359.0h1v1h-1zM481.5 439.7h1.5v2.5h-1.5zM490.5 353.7h1.5v1.5h-1.5zM473.3 375.3h2v1.5h-2zM505.2 396.3h2v1.5h-2zM484.4 444.9h2v2h-2zM509.1 398.5h2.5v2h-2.5zM486.9 426.4h1v3h-1zM466.9 432.1h2v1.5h-2zM490.2 428.9h2.5v2.5h-2.5zM484.8 427.4h2v2h-2zM492.9 310.1h1.5v3h-1.5zM493.4 308.0h1v2h-1zM498.0 423.4h2v2h-2zM499.7 431.2h2.5v1h-2.5zM506.5 401.3h2v1h-2zM509.8 401.6h2.5v2.5h-2.5zM510.3 397.9h1.5v1h-1.5zM511.9 427.8h1v2h-1zM494.6 310.3h1.5v1h-1.5zM509.9 407.9h2.5v1.5h-2.5zM501.0 344.0h1v1h-1zM502.5 398.9h2v2h-2zM498.8 425.0h1.5v3h-1.5zM509.8 386.8h2v1.5h-2zM500.3 371.2h2v3h-2zM491.4 316.7h2v3h-2zM502.3 408.0h2.5v2h-2.5zM478.8 440.3h1.5v2h-1.5zM487.7 442.2h1.5v2h-1.5zM493.9 347.0h2.5v1h-2.5zM504.8 355.0h1v1h-1zM503.5 384.2h1.5v3h-1.5zM476.3 411.9h1v1.5h-1zM508.5 397.4h2v1.5h-2zM466.9 421.2h2v1h-2zM483.5 313.0h2v1h-2zM493.5 315.9h2v2h-2zM505.1 418.7h1.5v1h-1.5zM490.7 299.7h1.5v2.5h-1.5zM501.1 394.5h2v2h-2zM485.3 325.9h2v1h-2zM476.7 444.5h1v3h-1zM491.8 305.1h2v2h-2zM494.0 436.8h2v1h-2zM501.5 384.3h2v3h-2zM491.6 319.2h2.5v2.5h-2.5zM485.0 438.6h1v3h-1zM481.2 428.1h1v3h-1zM503.5 397.4h2v2.5h-2zM505.2 365.6h2v2h-2zM474.8 435.0h2v1.5h-2zM494.8 400.9h1.5v2.5h-1.5zM508.9 422.5h1v1.5h-1zM504.4 441.1h1v1.5h-1zM492.4 323.2h2v2.5h-2zM516.4 410.0h1.5v2h-1.5zM493.7 367.2h2v1.5h-2zM493.3 441.5h2v2h-2zM484.8 432.6h2v1h-2zM515.4 404.9h2v1.5h-2zM513.8 399.7h2.5v1h-2.5zM508.7 431.6h1v3h-1z"/><path fill="#1f330f" d="M488.1 310.0h2v1h-2zM497.6 330.5h2v1h-2zM492.6 422.0h1.5v3h-1.5zM471.0 437.0h1.5v1.5h-1.5zM488.5 333.4h2.5v3h-2.5zM467.3 416.8h1v1h-1zM517.0 423.4h1v3h-1zM483.1 314.3h1.5v2h-1.5zM482.6 335.5h2v3h-2zM496.7 340.7h1.5v2.5h-1.5zM492.7 396.2h2.5v1h-2.5zM474.4 430.1h1v2h-1zM504.3 370.8h2v2h-2zM517.9 411.8h2v1h-2zM473.8 351.4h1v2.5h-1zM508.9 420.5h2v3h-2zM492.3 309.8h1v1.5h-1zM503.4 359.7h1v2.5h-1zM506.2 409.5h1v2.5h-1zM490.8 434.0h2.5v1h-2.5zM503.9 411.2h2v2.5h-2zM502.5 362.0h2.5v2.5h-2.5zM463.7 433.0h2.5v1.5h-2.5zM476.6 388.8h1.5v2h-1.5zM471.8 428.3h1.5v3h-1.5zM498.7 385.0h2v1h-2zM487.4 411.4h1.5v2.5h-1.5zM513.0 408.7h2v3h-2zM500.9 349.6h2v1.5h-2zM509.3 422.7h1.5v2h-1.5zM483.7 405.5h1.5v3h-1.5zM499.5 412.1h1v1.5h-1zM476.5 381.2h2v2h-2zM505.6 419.8h2.5v1h-2.5zM486.2 392.0h2v1.5h-2zM484.0 420.8h1v2h-1zM488.5 330.8h1.5v2.5h-1.5zM480.7 447.4h2v2.5h-2zM484.5 408.5h1v1.5h-1zM484.5 320.7h2v1.5h-2zM498.2 353.7h2.5v2.5h-2.5zM491.4 350.8h2v2.5h-2zM486.6 434.9h2v1h-2zM503.1 352.5h2v1h-2zM475.8 344.4h1.5v1h-1.5zM471.3 435.3h1.5v1.5h-1.5zM469.3 439.3h1v1h-1zM500.0 332.0h1.5v2.5h-1.5zM507.9 374.1h2v1.5h-2zM506.7 410.0h2v1h-2zM508.3 383.2h2v1.5h-2zM503.2 395.2h1.5v3h-1.5zM502.6 346.9h1v2h-1zM501.6 340.8h2v1.5h-2zM485.3 362.0h2v3h-2zM499.1 324.0h2v3h-2zM500.4 354.8h2v1h-2zM493.8 306.6h2v3h-2zM468.3 403.0h2.5v3h-2.5zM482.5 310.9h2.5v3h-2.5zM499.4 399.7h2v3h-2zM492.0 350.8h2.5v3h-2.5zM501.1 390.6h1v2h-1zM468.7 421.1h1.5v3h-1.5zM484.0 416.3h1v2.5h-1zM496.0 354.9h1v2h-1zM488.7 325.5h2.5v1.5h-2.5zM508.8 400.5h1v1h-1zM514.2 418.4h2v1h-2zM497.0 339.7h2v1h-2zM493.7 349.3h1.5v2.5h-1.5zM494.1 323.4h2v3h-2zM493.5 436.4h2.5v1h-2.5zM492.8 312.1h2v2.5h-2zM490.5 366.2h1v3h-1zM490.5 300.7h1v3h-1zM507.1 367.6h2v2h-2zM488.9 318.2h2v1h-2zM495.3 324.2h1v1.5h-1zM485.8 381.7h1.5v3h-1.5zM480.3 399.8h1.5v2.5h-1.5zM497.5 390.3h2v2.5h-2zM518.4 408.7h1v3h-1zM490.9 301.2h2.5v2.5h-2.5zM491.4 333.9h2v3h-2zM489.4 447.5h2v2.5h-2zM493.1 406.8h1v2.5h-1zM501.1 359.2h1v2.5h-1zM504.2 408.1h2v1.5h-2zM499.6 383.6h2.5v2.5h-2.5zM498.4 369.1h1v2.5h-1zM482.9 414.0h1v2.5h-1zM499.1 420.0h1v1.5h-1zM487.7 302.4h2.5v2.5h-2.5zM492.3 416.6h2.5v1h-2.5zM479.9 323.0h2.5v1.5h-2.5zM494.3 329.1h2v1h-2zM481.6 328.5h2v3h-2zM493.4 309.2h2.5v1.5h-2.5zM512.9 431.2h2v2h-2zM495.8 319.2h1.5v2h-1.5zM499.2 379.6h2.5v3h-2.5zM507.4 426.1h1.5v1.5h-1.5zM469.4 436.2h2.5v3h-2.5zM488.4 300.6h1.5v1.5h-1.5zM467.8 434.2h1.5v3h-1.5zM501.8 389.9h2.5v2.5h-2.5zM481.9 343.1h2v1h-2zM495.8 316.9h2v2h-2zM509.0 408.3h2v1h-2zM497.0 329.1h2.5v1.5h-2.5zM492.5 312.4h1.5v2h-1.5zM502.9 407.9h2v3h-2zM502.9 342.1h2.5v2.5h-2.5zM477.1 406.8h2.5v1h-2.5zM506.1 395.2h2.5v1.5h-2.5zM498.3 382.4h2.5v1.5h-2.5zM478.2 438.9h1v1.5h-1zM490.8 420.0h2v1.5h-2zM481.2 447.7h2.5v2h-2.5zM480.4 427.3h2.5v2h-2.5zM512.3 400.3h1v3h-1zM472.5 431.1h1v2h-1zM489.5 345.2h1.5v1.5h-1.5zM501.5 382.2h1.5v1h-1.5zM511.0 411.5h2v3h-2zM492.1 327.0h2.5v2h-2.5zM481.7 344.0h2.5v3h-2.5zM509.6 395.5h2v1.5h-2zM475.0 366.9h1v3h-1zM491.5 321.6h2v2.5h-2zM505.2 380.2h2v1h-2zM496.5 321.8h2.5v1.5h-2.5zM473.3 346.3h2v2h-2zM478.8 343.9h2v3h-2zM498.6 379.9h2.5v1.5h-2.5zM485.1 439.5h2v3h-2zM502.4 335.8h1v1.5h-1zM481.3 339.2h2.5v1.5h-2.5zM499.9 430.4h2.5v1.5h-2.5zM505.3 408.3h2v1h-2zM502.5 355.2h2.5v2.5h-2.5zM481.9 379.1h1v1h-1zM505.8 432.6h1v1.5h-1zM473.6 366.2h2v2.5h-2zM482.9 413.1h1.5v2.5h-1.5zM479.4 324.2h1.5v2h-1.5zM505.3 418.6h1v1h-1zM485.1 305.6h1v3h-1zM509.3 408.6h2v1.5h-2zM489.9 304.0h2.5v1h-2.5zM489.6 326.0h1v2h-1zM496.8 343.2h2v2h-2zM495.5 320.2h2v3h-2zM514.0 429.9h2v3h-2zM500.9 345.3h2.5v1.5h-2.5zM503.6 395.8h2.5v1.5h-2.5zM490.6 299.5h2v1.5h-2zM511.5 407.6h2v3h-2zM468.7 436.6h1.5v2.5h-1.5zM494.1 312.7h2v3h-2zM494.8 320.3h2.5v3h-2.5zM490.4 307.6h2.5v2.5h-2.5zM488.6 423.8h1v2h-1zM484.1 354.3h1.5v3h-1.5zM496.4 395.3h1.5v1.5h-1.5zM506.9 422.1h2v1h-2zM478.3 390.7h2v1.5h-2zM490.2 330.9h2.5v1h-2.5zM501.6 375.2h2.5v1.5h-2.5zM507.8 422.8h2v3h-2zM481.8 363.1h2v3h-2zM502.6 354.8h1.5v1h-1.5zM490.4 300.5h2v1.5h-2zM494.5 325.8h2.5v1.5h-2.5zM475.1 425.8h2v3h-2zM507.2 406.0h2v1.5h-2zM510.1 410.3h1v1.5h-1zM503.5 372.5h1v1h-1zM477.5 432.9h2v2.5h-2zM488.9 337.9h2.5v1.5h-2.5zM466.4 431.7h2v1.5h-2zM489.2 304.8h1v2.5h-1zM493.7 308.3h2v1.5h-2zM481.1 412.8h2v1h-2zM495.5 411.9h2v2h-2zM480.2 366.5h2v1.5h-2zM501.3 403.7h2v2.5h-2zM474.1 343.9h1.5v2.5h-1.5zM509.4 423.7h2.5v2.5h-2.5zM497.9 321.5h1v1h-1zM504.9 400.1h2.5v1.5h-2.5zM504.7 382.0h1v2h-1zM485.9 317.7h2.5v2.5h-2.5zM500.3 421.0h2v2.5h-2zM476.7 387.6h1v2.5h-1zM481.8 435.2h2v1.5h-2zM490.7 359.2h1v1.5h-1zM487.9 428.2h2.5v1.5h-2.5zM503.1 349.0h1v2.5h-1zM511.5 416.4h2v3h-2zM484.6 373.4h2v2.5h-2zM468.4 442.5h2.5v2h-2.5zM478.5 382.7h1v2h-1zM488.2 352.5h1.5v3h-1.5zM507.7 383.5h2v1.5h-2zM486.9 378.1h2v1.5h-2zM509.5 409.4h2v1.5h-2zM484.6 361.4h1v1h-1zM486.0 344.3h2.5v1h-2.5zM477.0 346.8h1.5v1h-1.5zM476.2 351.3h2v3h-2zM489.2 437.4h1v3h-1zM513.9 394.8h1v1.5h-1zM480.2 439.6h1.5v2h-1.5zM500.9 416.4h1v1h-1zM499.2 331.9h2v2h-2zM473.5 445.3h1v1h-1zM498.5 402.3h1.5v2.5h-1.5zM493.4 392.9h2v2.5h-2zM490.7 311.8h2v1h-2zM490.5 443.9h2.5v2h-2.5zM495.9 334.4h1v2.5h-1zM486.4 339.9h1v2.5h-1zM496.3 313.4h1.5v3h-1.5zM498.5 347.3h1v1h-1zM496.5 386.6h1v2h-1zM495.6 316.1h2.5v2h-2.5zM499.0 371.3h2v3h-2zM499.5 351.3h2.5v1.5h-2.5zM490.5 441.1h2.5v1.5h-2.5zM460.8 421.9h2v2.5h-2zM513.9 403.8h2.5v1.5h-2.5zM478.8 390.4h2v2h-2zM484.5 425.5h2.5v2h-2.5zM502.8 367.9h1.5v3h-1.5zM490.6 374.3h2v1h-2zM490.8 300.8h2v2h-2zM470.0 409.1h1v2.5h-1zM488.5 303.0h2v1h-2zM471.6 437.5h2v1h-2zM472.2 380.2h2v2.5h-2zM506.5 381.6h1.5v2h-1.5zM488.2 442.8h2.5v3h-2.5zM484.7 407.5h2v3h-2zM465.8 439.3h2v1h-2zM491.5 413.1h2.5v1h-2.5zM498.3 331.7h2v1.5h-2zM496.9 322.2h2v2.5h-2zM478.1 443.5h1.5v2.5h-1.5zM483.9 447.6h2.5v2h-2.5zM491.3 429.6h2.5v3h-2.5zM485.8 392.6h2v2.5h-2zM502.3 419.4h1v2h-1zM501.6 386.4h1v3h-1zM493.1 306.1h1.5v3h-1.5zM482.0 435.1h1.5v1h-1.5zM514.4 418.8h2v2h-2zM483.1 322.3h2v3h-2zM493.8 402.1h1.5v2.5h-1.5zM505.5 391.4h2v1h-2zM497.5 331.4h1.5v1h-1.5zM499.3 386.3h2v2.5h-2zM476.0 349.5h1.5v1h-1.5zM515.5 398.7h1v2h-1zM487.1 422.6h2v1.5h-2zM497.4 333.3h1.5v1.5h-1.5zM494.1 307.0h1.5v1.5h-1.5zM491.8 311.2h2v1h-2zM479.9 345.1h2v3h-2zM510.9 389.8h1v1.5h-1zM496.9 387.8h1.5v3h-1.5z"/><path fill="#2a4314" d="M494.6 335.2h2v3h-2zM494.2 310.4h2v1.5h-2zM505.5 382.9h2v2h-2zM497.0 384.4h2.5v2h-2.5zM504.8 374.9h2.5v1.5h-2.5zM491.5 435.8h1v1.5h-1zM474.9 383.0h2.5v2h-2.5zM485.7 317.1h2.5v2h-2.5zM494.4 314.6h2v2.5h-2zM492.1 400.7h2.5v1.5h-2.5zM501.5 393.1h1.5v1h-1.5zM478.5 369.8h1v1h-1zM460.2 421.8h2.5v1h-2.5zM492.8 403.9h2v2.5h-2zM490.3 374.9h2.5v2h-2.5zM491.3 351.0h2.5v2.5h-2.5zM510.0 391.4h2.5v2.5h-2.5zM485.0 436.3h2.5v1.5h-2.5zM502.3 394.5h2v2.5h-2zM483.9 347.5h2v1h-2zM497.6 384.5h2v1h-2zM502.7 386.9h2v1h-2zM489.9 433.2h2.5v3h-2.5zM497.0 327.6h2v2h-2zM477.9 406.3h2v2.5h-2zM467.8 404.4h2v2.5h-2zM508.1 374.9h1.5v2h-1.5zM491.6 317.5h2v1h-2zM498.2 322.3h2.5v1h-2.5zM494.8 323.8h1.5v1h-1.5zM470.6 372.1h2.5v2.5h-2.5zM488.8 300.2h2v1h-2zM488.7 412.6h2v2h-2zM488.5 334.2h2.5v2.5h-2.5zM478.0 398.3h2.5v1.5h-2.5zM483.0 394.0h2v2h-2zM488.4 390.9h2v2h-2zM491.1 410.3h1.5v1.5h-1.5zM464.6 428.1h2v2.5h-2zM484.6 401.3h1.5v1h-1.5zM485.5 309.7h1.5v1h-1.5zM484.5 325.2h1.5v2.5h-1.5zM495.2 432.5h2v2.5h-2zM470.2 378.2h1v3h-1zM481.7 377.6h2v3h-2zM497.0 335.1h2v1.5h-2zM504.2 378.5h1.5v1h-1.5zM504.7 364.1h2v1h-2zM495.9 354.0h2v1h-2zM488.0 362.3h2v1h-2zM491.2 376.7h1v2h-1zM499.9 411.8h1v1h-1zM486.7 312.1h1.5v1h-1.5zM498.7 322.4h2v2h-2zM477.9 397.8h1v2h-1zM490.3 301.6h2.5v1.5h-2.5zM483.4 376.3h1v2.5h-1zM495.4 347.2h1.5v3h-1.5zM492.2 363.5h1v1.5h-1zM499.9 358.1h1v1h-1zM485.1 384.5h2v2.5h-2zM492.6 377.5h1v2h-1zM476.1 362.8h1.5v2.5h-1.5zM490.5 300.6h2v1.5h-2zM479.5 369.0h2.5v2.5h-2.5zM509.3 378.7h2v3h-2zM482.7 311.3h2v3h-2zM490.4 374.1h2v3h-2zM482.4 391.1h1.5v2.5h-1.5zM474.6 429.2h1v1h-1zM499.3 413.3h2.5v1h-2.5zM488.6 401.5h2.5v2h-2.5zM483.3 339.5h1v3h-1zM494.3 412.4h2v1.5h-2zM517.8 419.9h1v1.5h-1zM500.6 392.8h2v2h-2zM480.0 438.0h2.5v2.5h-2.5zM510.5 408.3h2v3h-2zM510.3 388.7h2v1.5h-2zM481.8 355.8h1v2h-1zM479.4 379.4h1v1h-1zM490.0 305.9h2.5v1.5h-2.5zM498.5 427.1h2v2.5h-2zM490.0 307.9h2v2.5h-2zM494.7 314.4h1.5v1.5h-1.5zM479.4 347.3h1v2h-1zM481.5 437.8h1v3h-1zM490.2 334.8h2v1.5h-2zM485.4 308.1h2.5v3h-2.5zM477.7 334.2h2.5v2.5h-2.5zM464.1 399.9h1.5v2h-1.5zM467.4 432.2h1.5v1h-1.5zM490.4 328.4h2v2.5h-2zM500.9 391.4h2.5v1h-2.5zM490.7 447.3h2v1h-2zM485.1 303.5h2.5v1.5h-2.5zM485.4 325.1h2v1.5h-2zM482.7 339.9h2v2.5h-2zM484.3 306.0h2v3h-2zM491.7 377.6h1v3h-1zM493.3 319.3h2v1h-2zM485.7 347.4h2.5v2h-2.5zM472.8 438.9h2v3h-2zM480.7 323.4h1v2h-1zM465.3 396.8h2v3h-2zM494.6 414.3h2.5v2h-2.5zM503.2 367.3h2v1h-2zM485.0 366.7h1v2.5h-1zM484.2 311.6h2.5v1.5h-2.5zM508.8 405.4h1.5v2.5h-1.5zM487.8 310.2h1.5v1.5h-1.5zM490.6 299.5h1.5v2.5h-1.5zM507.6 401.0h1.5v1.5h-1.5zM501.3 371.9h1.5v1h-1.5zM492.8 303.5h1.5v3h-1.5zM473.8 425.6h1.5v2.5h-1.5zM498.0 377.8h1.5v2.5h-1.5zM504.7 360.1h1v1.5h-1zM477.6 350.3h2v3h-2zM494.8 388.2h2.5v2h-2.5zM486.4 395.8h2v1h-2zM482.6 328.0h2v3h-2zM500.0 439.9h1v3h-1zM514.2 416.1h1.5v2h-1.5zM471.4 404.8h2v3h-2zM485.8 439.5h2v2h-2zM483.0 376.5h2v1.5h-2zM459.7 413.4h1.5v2.5h-1.5zM479.4 371.8h2v1h-2zM504.3 407.2h2v1.5h-2zM493.4 380.2h2v1.5h-2zM491.2 360.1h1v2h-1zM501.0 372.1h2v1.5h-2zM481.6 428.5h2v1h-2zM487.8 368.0h1.5v2h-1.5zM469.1 386.0h2v3h-2zM479.6 410.2h1v2.5h-1zM471.0 392.1h1.5v1h-1.5zM483.7 348.7h1v1.5h-1zM494.3 313.5h2v2.5h-2zM476.7 367.7h2v1h-2zM478.1 341.3h1v1.5h-1zM467.4 391.4h2v2.5h-2zM493.0 319.3h2v1h-2zM472.8 393.2h2.5v2h-2.5zM471.3 394.1h1.5v1h-1.5zM499.2 415.8h2.5v3h-2.5zM480.3 389.3h2v1.5h-2zM514.5 417.7h2v1h-2zM508.0 425.6h1.5v2.5h-1.5zM493.1 305.3h1.5v2.5h-1.5zM476.9 389.5h2v2h-2zM483.3 409.0h2v3h-2zM495.1 316.4h2v2.5h-2zM487.8 315.7h2v1h-2zM465.3 431.3h1.5v2h-1.5zM505.9 386.5h2v1h-2zM493.4 370.3h2v1.5h-2zM463.2 429.5h1.5v2.5h-1.5zM497.2 331.7h1v2h-1zM466.4 396.6h2v2h-2zM497.0 380.4h2v3h-2zM505.1 364.9h2.5v2h-2.5zM504.4 359.1h2.5v2.5h-2.5zM509.0 380.1h2.5v1.5h-2.5zM501.7 393.0h2v2h-2zM485.5 330.2h1.5v2h-1.5zM509.6 407.8h2v1h-2zM502.8 371.5h1.5v2.5h-1.5zM489.3 413.6h2v1h-2zM498.4 361.3h1v2h-1zM494.5 319.9h2v1.5h-2zM472.2 365.0h2.5v1h-2.5zM481.1 322.3h2v1.5h-2zM487.4 397.3h1.5v1.5h-1.5zM499.9 380.3h2v2.5h-2zM475.9 354.1h1v3h-1zM479.4 413.2h2v2h-2zM474.3 372.3h1.5v3h-1.5zM475.4 337.4h2v2h-2zM509.5 417.2h1v1.5h-1zM460.6 408.9h2v1h-2zM481.5 392.6h1v1.5h-1zM496.5 327.1h2v1.5h-2zM492.6 308.1h2v1h-2zM493.8 309.8h2.5v2h-2.5zM501.4 342.3h2v1h-2zM493.0 329.3h2v1h-2zM490.5 367.7h1v2h-1zM505.4 371.5h1v2.5h-1zM477.0 334.1h1.5v3h-1.5zM484.4 313.4h1.5v1h-1.5zM495.2 345.0h1v1.5h-1zM488.0 300.1h1v2h-1zM512.8 394.9h2v1h-2zM509.6 408.0h1v1.5h-1zM494.5 365.5h1.5v1h-1.5zM479.9 371.5h2v1h-2zM473.2 437.4h2.5v1h-2.5zM482.7 352.0h2.5v3h-2.5zM481.7 413.4h2.5v3h-2.5zM506.1 367.8h2.5v2.5h-2.5zM464.7 395.5h1.5v1.5h-1.5zM473.8 354.2h1.5v2.5h-1.5zM490.1 302.8h2v1h-2zM479.2 437.7h2v1.5h-2zM468.3 402.1h1v3h-1zM496.5 432.8h1.5v2h-1.5zM489.1 335.8h2v2h-2zM504.3 375.8h1v1.5h-1zM492.3 402.8h2v2.5h-2zM503.2 377.9h1v1h-1zM494.5 309.1h1v2.5h-1zM481.0 442.7h2v1h-2zM486.4 407.8h2v1.5h-2zM476.8 424.3h2.5v1.5h-2.5zM487.3 319.2h1.5v1h-1.5zM491.4 310.2h1v3h-1zM487.6 342.1h2v3h-2zM484.6 340.5h2v2.5h-2zM506.8 367.3h1v2h-1zM488.2 384.9h2v1.5h-2zM509.4 430.3h2.5v1h-2.5zM477.5 351.3h2.5v3h-2.5zM480.1 327.1h1v3h-1zM490.5 354.7h2v1.5h-2zM502.1 402.5h2v3h-2zM486.4 384.6h2v3h-2zM500.4 382.8h1.5v1.5h-1.5zM505.1 365.2h2v2h-2zM492.1 305.1h1v1.5h-1zM510.5 401.4h1.5v1.5h-1.5zM475.4 368.3h2v1h-2zM476.6 401.7h1.5v2.5h-1.5zM499.0 358.6h2.5v2h-2.5zM487.0 300.8h2.5v2.5h-2.5zM483.8 350.3h2.5v1h-2.5zM481.0 317.6h2v3h-2zM495.3 367.0h2.5v3h-2.5zM494.2 366.3h2v2.5h-2zM491.4 316.0h1v1h-1zM512.3 426.9h1.5v2.5h-1.5zM484.4 412.3h2.5v2h-2.5zM490.1 333.9h2.5v2h-2.5zM469.5 378.3h2.5v2.5h-2.5zM475.4 344.2h1.5v3h-1.5zM491.4 301.9h2v3h-2zM491.6 307.0h2v2.5h-2zM497.2 429.2h2.5v1h-2.5zM504.5 356.8h1v1h-1zM461.7 403.1h2.5v3h-2.5zM510.1 391.2h2.5v3h-2.5zM471.7 423.3h2.5v1.5h-2.5zM495.1 427.8h2v2h-2zM493.5 306.6h2v1h-2zM478.2 329.9h2v1h-2zM494.7 328.3h1v2.5h-1zM497.8 367.6h2.5v1.5h-2.5zM482.8 435.7h1.5v1h-1.5zM467.3 405.5h2v3h-2zM488.8 328.6h2v1h-2zM480.7 324.0h1v1.5h-1zM504.4 376.7h1v2.5h-1zM503.8 376.3h2v1.5h-2zM500.3 392.1h1v1.5h-1zM488.0 318.0h1v1h-1zM483.2 358.4h2.5v2.5h-2.5zM506.7 374.8h2v1h-2zM494.0 421.5h2v1h-2zM488.8 312.5h1.5v1h-1.5zM468.0 391.1h1v1h-1zM478.2 332.3h2v2h-2zM484.9 316.6h1.5v1.5h-1.5zM494.1 361.7h1v1h-1zM516.6 410.5h2v2h-2zM508.7 410.1h2.5v1h-2.5zM495.8 316.9h1.5v2.5h-1.5zM482.8 348.9h2v1h-2zM498.5 365.1h2v3h-2zM489.8 434.7h1v1.5h-1zM499.9 428.6h2v1.5h-2zM498.7 334.0h2v1.5h-2zM500.3 374.2h1v3h-1zM490.6 350.9h1.5v1.5h-1.5zM469.0 432.0h2v3h-2zM506.0 413.9h2v3h-2zM490.4 331.0h1v1.5h-1zM468.7 385.7h1v2.5h-1zM492.0 431.8h2.5v2h-2.5zM500.4 358.7h1.5v2.5h-1.5zM493.7 308.0h1v2h-1zM497.8 322.5h2v2.5h-2zM485.6 371.4h2v2.5h-2zM483.8 444.7h1.5v1.5h-1.5zM500.6 332.3h1.5v1.5h-1.5zM501.8 334.8h1v2.5h-1zM500.7 399.2h2v1.5h-2zM494.0 352.5h1.5v1h-1.5zM492.7 382.0h2v1.5h-2zM495.2 343.3h1v1h-1zM494.2 405.0h2.5v3h-2.5zM484.1 352.7h1.5v1.5h-1.5zM492.8 355.9h2v3h-2zM485.8 318.7h2v2h-2zM464.3 435.7h1.5v1.5h-1.5zM460.1 417.8h1.5v2h-1.5zM489.1 439.2h2v1h-2zM490.5 334.8h1.5v1h-1.5zM491.4 440.6h2.5v1h-2.5zM479.8 334.1h1v3h-1zM486.4 387.7h1v1h-1zM492.7 333.3h2v1h-2zM501.9 364.7h1.5v2.5h-1.5zM496.8 315.6h1v3h-1zM486.0 333.3h1v1.5h-1zM477.8 404.7h2v2.5h-2zM495.5 350.4h1v3h-1zM473.0 384.3h2v1h-2zM469.1 392.4h1v1h-1zM488.1 311.3h1.5v1.5h-1.5zM486.7 430.9h1.5v1.5h-1.5zM491.6 335.2h1.5v2.5h-1.5zM485.0 310.9h2v2h-2zM480.1 337.2h2v3h-2zM489.4 440.2h1v1h-1zM477.8 342.7h1v2h-1zM499.0 423.5h2v3h-2zM468.6 385.6h2.5v1.5h-2.5zM499.9 411.3h2.5v1.5h-2.5zM498.1 431.1h2.5v2h-2.5zM469.7 438.0h1.5v3h-1.5zM468.1 407.3h1v2.5h-1zM492.5 419.7h1.5v2h-1.5zM483.0 438.3h1v2.5h-1zM500.3 412.6h2.5v3h-2.5zM475.7 443.8h2v2h-2zM485.1 441.9h2v1.5h-2zM505.4 412.8h1.5v1h-1.5zM492.8 312.9h2v2.5h-2zM484.2 366.0h2v3h-2zM488.3 374.1h2.5v1h-2.5zM484.6 334.4h1.5v2.5h-1.5zM471.8 373.4h2v3h-2zM459.7 416.2h2.5v1.5h-2.5zM490.1 300.6h2.5v1.5h-2.5zM502.9 393.2h1v3h-1zM476.9 405.5h1.5v2.5h-1.5zM473.3 390.1h2v1h-2zM482.0 314.5h1.5v2h-1.5zM483.4 441.2h2v2.5h-2zM497.4 400.0h1.5v1.5h-1.5zM481.6 362.8h2v1.5h-2zM499.0 350.9h1.5v2h-1.5zM492.7 363.1h2v2h-2zM498.6 359.5h1.5v3h-1.5zM497.5 388.4h1v1h-1zM491.6 303.9h1.5v1.5h-1.5zM471.7 397.3h2v2.5h-2zM512.4 426.6h2v1.5h-2zM483.8 317.1h1.5v1h-1.5zM493.0 353.2h2v3h-2zM500.3 349.2h2v3h-2z"/><path fill="#365419" d="M470.0 404.3h2.5v3h-2.5zM501.0 390.0h2v1.5h-2zM489.2 337.7h1v3h-1zM493.4 331.3h2v2h-2zM489.8 329.9h2v1.5h-2zM483.4 344.9h1.5v1.5h-1.5zM466.5 387.5h1.5v2.5h-1.5zM490.3 382.5h2v3h-2zM463.8 419.7h2.5v1h-2.5zM485.8 339.9h2v2h-2zM493.3 311.4h1.5v3h-1.5zM463.1 403.4h2v2.5h-2zM493.3 309.7h1v2h-1zM464.8 416.0h1v2h-1zM512.6 408.8h1.5v1h-1.5zM484.3 429.3h2v1.5h-2zM465.5 404.9h2v2.5h-2zM489.8 328.5h2v2h-2zM471.4 365.7h1.5v3h-1.5zM471.3 381.1h1.5v1.5h-1.5zM471.3 390.6h1.5v2.5h-1.5zM489.0 303.0h1v1h-1zM476.6 380.6h1v3h-1zM482.8 379.3h1.5v3h-1.5zM494.5 407.0h2v3h-2zM475.1 429.9h2v1h-2zM474.4 368.3h1.5v3h-1.5zM499.4 360.4h1.5v2.5h-1.5zM507.0 382.1h1v3h-1zM489.5 363.0h2.5v3h-2.5zM497.8 324.6h1v3h-1zM493.0 307.5h2.5v3h-2.5zM488.4 306.5h1v1.5h-1zM499.0 371.2h1.5v1.5h-1.5zM490.1 408.9h2v3h-2zM474.2 354.4h2.5v1.5h-2.5zM477.2 370.8h1.5v2h-1.5zM475.3 403.9h1.5v1.5h-1.5zM489.1 317.6h2v2h-2zM502.8 382.7h1v1.5h-1zM483.0 381.3h1v2h-1zM495.4 342.8h2v1h-2zM490.6 301.2h1v3h-1zM499.5 418.4h2v2h-2zM491.7 391.3h2v2h-2zM489.2 424.9h2.5v2.5h-2.5zM475.4 409.0h1.5v1.5h-1.5zM492.0 327.1h1v2.5h-1zM509.0 385.4h1.5v2h-1.5zM480.7 323.2h2v2.5h-2zM485.9 338.6h2v1.5h-2zM477.7 411.3h1.5v1h-1.5zM489.2 406.4h2v2h-2zM486.4 391.2h2v3h-2zM466.9 433.4h2v1.5h-2zM475.1 398.2h2v2.5h-2zM495.0 369.7h1v1.5h-1zM490.2 422.9h1v1h-1zM501.8 407.7h1v2.5h-1zM474.5 409.1h2v1h-2zM488.5 344.6h2.5v2h-2.5zM497.7 415.8h1v2.5h-1zM483.4 403.4h1v1.5h-1zM511.9 398.6h2v2.5h-2zM474.0 345.9h1.5v2h-1.5zM494.9 346.0h2v3h-2zM492.3 303.6h2v2.5h-2zM475.8 334.6h2.5v2h-2.5zM479.6 433.1h1.5v1h-1.5zM491.7 415.8h1v3h-1zM478.7 418.6h1v1.5h-1zM493.9 332.8h2v2h-2zM469.3 408.7h1.5v3h-1.5zM485.8 401.4h2v1.5h-2zM496.1 313.0h1.5v3h-1.5zM499.2 330.0h1v1h-1zM478.7 407.2h1v1h-1zM490.6 303.8h2v2.5h-2zM495.5 436.8h2v2h-2zM476.7 408.6h2v2.5h-2zM478.6 440.5h2.5v2h-2.5zM486.8 308.1h1.5v2.5h-1.5zM490.7 301.5h2v1.5h-2zM497.3 319.4h2v2.5h-2zM472.0 430.6h1.5v2.5h-1.5zM500.3 343.8h2.5v2.5h-2.5zM489.1 313.5h2.5v2h-2.5zM473.5 398.3h2v3h-2zM478.1 444.7h1.5v1.5h-1.5zM499.5 340.5h1v2.5h-1zM488.8 323.7h2v3h-2zM486.1 392.1h2.5v1h-2.5zM486.6 317.4h1v3h-1zM507.5 379.1h1.5v1.5h-1.5zM491.0 306.6h2v2.5h-2zM485.0 437.7h2v3h-2zM493.0 407.8h2v1h-2zM502.6 352.7h2v2h-2zM503.9 380.2h2v1h-2zM470.0 426.0h2v1.5h-2zM503.9 370.0h2.5v1.5h-2.5zM485.7 412.8h1.5v1h-1.5zM493.7 358.2h2v2.5h-2zM474.7 345.2h1.5v2h-1.5zM503.5 374.9h2.5v3h-2.5zM492.6 333.2h2v2.5h-2zM486.0 309.3h1v2h-1zM462.7 415.8h2v1.5h-2zM499.3 322.6h1v2.5h-1zM498.4 327.8h1v2h-1zM479.7 407.2h1.5v2.5h-1.5zM489.0 348.2h1v1h-1zM489.2 410.4h1.5v2h-1.5zM488.7 302.3h2v1.5h-2zM494.2 313.0h2v1.5h-2zM494.3 338.5h1v1.5h-1zM474.6 344.4h1v1.5h-1zM482.3 314.4h2v3h-2zM472.2 425.8h2v2.5h-2zM506.7 380.7h2v2h-2zM492.4 306.8h2.5v2h-2.5zM503.3 409.9h2v1h-2zM504.0 347.8h1.5v3h-1.5zM492.6 305.9h2v2.5h-2zM472.9 377.4h1v2h-1zM506.7 389.0h1.5v2h-1.5zM489.1 341.1h1.5v3h-1.5zM481.2 331.3h2.5v1h-2.5zM492.4 311.0h1.5v3h-1.5zM491.9 339.5h2v1.5h-2zM491.2 424.3h2.5v3h-2.5zM493.5 404.7h2.5v3h-2.5zM491.1 389.8h2v2.5h-2zM496.5 344.6h2v2.5h-2zM487.1 393.3h1.5v2h-1.5zM488.6 349.3h2v1.5h-2zM499.4 336.5h2v2.5h-2zM496.0 334.7h2.5v1.5h-2.5zM478.0 334.6h2.5v1.5h-2.5zM497.0 323.0h2v2h-2zM491.0 396.0h1.5v1h-1.5zM486.4 306.8h2.5v3h-2.5zM470.5 423.1h2v1.5h-2zM484.8 368.9h1v3h-1zM478.1 351.6h2v2h-2zM489.5 333.7h2v2h-2zM489.1 362.9h2.5v2h-2.5zM494.2 311.9h2v1.5h-2zM504.7 407.6h2v2.5h-2zM488.8 366.1h1.5v2h-1.5zM489.9 303.0h2v2.5h-2zM481.8 318.4h2.5v2.5h-2.5zM472.1 403.4h2v1h-2zM481.6 380.6h1v1.5h-1zM463.0 415.5h2v2.5h-2zM485.7 344.2h2v3h-2zM483.0 335.9h2v1h-2zM470.7 394.1h2.5v3h-2.5zM488.8 326.2h2v1h-2zM469.9 387.9h1v1h-1zM501.9 414.1h1.5v1h-1.5zM486.0 422.3h1.5v2h-1.5zM501.1 334.1h2.5v1h-2.5zM477.9 417.4h2v1h-2zM480.0 404.9h1.5v2h-1.5zM490.3 405.6h2v3h-2zM464.0 434.1h1.5v3h-1.5zM495.7 387.2h2.5v2.5h-2.5zM512.4 395.5h2v1h-2zM499.7 369.4h2.5v1h-2.5zM495.6 325.3h2v1.5h-2zM489.9 361.7h2v1.5h-2zM494.3 356.7h1v3h-1zM488.7 424.2h1.5v1h-1.5zM473.0 368.6h1v2h-1zM496.8 326.9h2.5v2.5h-2.5zM473.6 373.9h2v1.5h-2zM491.7 373.1h2v2.5h-2zM498.1 377.9h2v1h-2zM497.8 357.5h2.5v1h-2.5zM465.4 430.3h2.5v1.5h-2.5zM484.1 320.0h2v2.5h-2zM482.1 397.4h2v2.5h-2zM492.0 316.7h2v1h-2zM487.6 346.4h2v3h-2zM492.8 386.4h2v2.5h-2zM470.7 430.4h2.5v2h-2.5zM487.4 399.5h2v2h-2zM489.1 380.1h2v2h-2zM475.6 362.5h2v2.5h-2zM503.9 362.1h2.5v3h-2.5zM493.7 337.2h2v1h-2zM496.6 331.8h2v3h-2zM494.4 424.3h2.5v2.5h-2.5zM477.9 329.2h1v2.5h-1zM493.2 311.3h2v2h-2zM492.0 333.6h1.5v3h-1.5zM512.0 404.7h1v1h-1zM474.6 353.6h1.5v2.5h-1.5zM495.6 314.2h2v3h-2zM483.3 321.5h1.5v3h-1.5zM465.8 414.7h2.5v2h-2.5zM478.0 351.3h2v3h-2zM485.4 375.9h1v3h-1zM492.4 318.7h2v3h-2zM469.9 415.0h2v3h-2zM505.5 400.3h1.5v1.5h-1.5zM492.2 330.8h1.5v1h-1.5zM504.4 427.3h2.5v1.5h-2.5zM487.9 306.5h1.5v1h-1.5zM469.8 377.9h2.5v1h-2.5zM482.8 346.5h1.5v2.5h-1.5zM478.7 403.7h2v1.5h-2zM490.9 365.9h1.5v1.5h-1.5zM482.1 316.2h1v2.5h-1zM481.2 374.4h2v1h-2zM487.4 315.5h1v1h-1zM487.8 307.2h2v3h-2zM470.0 395.7h2v2h-2zM488.6 308.6h1.5v2h-1.5zM467.0 437.4h2v2h-2zM492.2 398.3h2v1.5h-2zM490.2 364.3h2v3h-2zM487.4 299.4h2v3h-2zM494.4 348.4h1v3h-1zM478.2 337.5h2.5v1h-2.5zM475.9 424.0h2v1h-2zM490.6 301.0h2v3h-2zM468.1 432.9h1.5v1.5h-1.5zM508.2 414.7h1v2h-1zM504.2 361.1h2v2h-2zM489.8 446.4h1v1h-1zM500.0 328.2h2v1h-2zM469.4 426.7h2v2h-2zM480.9 417.9h2.5v3h-2.5zM494.0 378.0h1v2h-1zM469.8 409.8h2.5v3h-2.5zM491.2 306.1h2v2.5h-2zM490.4 379.4h2v1h-2zM483.7 370.6h1v2.5h-1zM498.2 350.7h2v3h-2zM510.3 426.5h2.5v2.5h-2.5zM482.0 380.6h2v1.5h-2zM502.6 358.5h2.5v3h-2.5zM487.4 310.9h2v3h-2zM482.7 390.7h1v2.5h-1zM487.2 319.1h2v1.5h-2zM477.7 386.4h2v1.5h-2zM472.1 379.2h1v1h-1zM512.3 399.1h2v2h-2zM502.5 379.3h2.5v3h-2.5zM467.5 433.4h2.5v2h-2.5zM496.0 360.7h2v1.5h-2zM488.8 301.6h2v1h-2zM481.1 321.1h2v3h-2zM488.6 328.5h2v3h-2zM488.2 316.9h2.5v2.5h-2.5zM490.1 388.7h2v3h-2zM493.4 338.8h1.5v1.5h-1.5zM487.5 345.1h1.5v1.5h-1.5zM499.7 355.2h1.5v2.5h-1.5zM505.5 417.6h2v3h-2zM476.8 358.0h2v1h-2zM494.4 331.0h1v2.5h-1zM500.5 343.8h2v2h-2zM483.5 362.8h2v3h-2zM480.0 334.3h1v2h-1zM493.7 375.2h2.5v1.5h-2.5zM471.8 406.6h2.5v1.5h-2.5zM485.3 371.6h2.5v2h-2.5zM503.0 360.9h1.5v2.5h-1.5zM480.4 366.3h1.5v2h-1.5zM500.5 383.2h2v3h-2zM510.2 401.6h2v2.5h-2zM489.6 305.5h1.5v1.5h-1.5zM478.2 384.0h2.5v3h-2.5zM496.4 361.7h1.5v3h-1.5zM486.7 309.9h1.5v2h-1.5zM488.9 341.1h1.5v2.5h-1.5zM493.3 308.2h1v1h-1zM487.7 358.3h1.5v3h-1.5zM491.3 364.5h1v2.5h-1zM472.7 389.9h2v3h-2zM494.4 346.6h1v2h-1zM471.9 367.5h1v2.5h-1zM482.2 393.1h1v2.5h-1zM494.6 413.6h2v3h-2zM493.7 393.0h2v1.5h-2zM486.3 305.3h2.5v2.5h-2.5zM477.7 371.2h2v2h-2zM479.1 387.9h2v2h-2zM473.6 401.7h2v2.5h-2zM493.9 331.1h2v3h-2zM464.9 438.2h2.5v1.5h-2.5zM491.6 303.7h2.5v1h-2.5zM507.2 407.8h1.5v1.5h-1.5zM485.3 386.6h2v1.5h-2zM485.6 345.0h2v3h-2zM497.0 328.1h2v3h-2zM488.2 303.4h1.5v1.5h-1.5zM478.4 365.7h1.5v2.5h-1.5zM483.2 412.3h2v2.5h-2zM495.9 373.5h2.5v1h-2.5zM510.9 426.1h2.5v3h-2.5zM484.6 313.6h2v2h-2zM485.1 381.3h2.5v1.5h-2.5zM495.4 334.9h2v3h-2zM490.1 299.3h1v1h-1zM494.6 318.1h2v1h-2zM459.7 413.5h2v2h-2zM464.5 429.5h2v2h-2zM495.6 404.8h1.5v1.5h-1.5zM491.7 432.4h2v1h-2zM496.7 344.1h2.5v1h-2.5zM471.3 375.8h2v2.5h-2zM512.8 420.3h2v3h-2zM471.1 393.3h2v2.5h-2zM494.5 359.0h1.5v2.5h-1.5zM489.0 314.2h2v3h-2zM491.3 337.7h2v2h-2zM467.6 433.8h2.5v1h-2.5zM500.3 337.7h2v1.5h-2zM504.5 374.0h2v3h-2zM478.2 350.6h1v2h-1zM472.6 393.2h1v3h-1zM497.2 342.8h1.5v1.5h-1.5zM486.4 374.4h1.5v1h-1.5zM495.5 323.7h2.5v2h-2.5zM495.1 405.7h1.5v2h-1.5zM485.8 315.8h2v1h-2zM471.5 422.1h2v3h-2zM484.5 316.7h2v1h-2zM473.4 383.9h2v3h-2zM491.7 428.0h2v3h-2zM484.0 351.1h2v1.5h-2zM507.0 367.3h1v2h-1zM481.7 349.0h1v3h-1zM479.4 382.0h1.5v3h-1.5zM501.8 364.1h2v1h-2zM499.8 326.3h1.5v2.5h-1.5zM494.4 319.2h1.5v1h-1.5zM493.8 403.3h2v1h-2zM490.6 305.4h2.5v3h-2.5zM486.1 367.1h2v3h-2zM473.6 443.8h2v1.5h-2zM465.9 420.8h1.5v1h-1.5zM494.3 432.8h1v2.5h-1zM481.2 448.0h1v1.5h-1zM495.1 323.7h2v2.5h-2zM481.8 332.1h1v2h-1zM504.0 352.5h1v1h-1zM466.6 423.6h2v2h-2zM484.8 391.0h1.5v1h-1.5zM482.3 435.3h2v1.5h-2zM483.5 367.9h2v2h-2zM471.2 375.9h1v1h-1zM487.8 383.3h2v2.5h-2zM482.6 334.8h1v1.5h-1zM485.7 324.2h1.5v2h-1.5zM498.6 334.2h1v2.5h-1zM505.4 384.0h2v2h-2zM489.3 396.8h2v2h-2zM498.3 332.3h2v1.5h-2zM482.3 378.9h2.5v2.5h-2.5zM510.2 426.8h2.5v2h-2.5zM493.6 379.8h2v3h-2zM486.2 426.3h2v2.5h-2zM492.0 347.4h2v2h-2zM484.3 325.7h2v2h-2zM503.9 393.7h2v1.5h-2zM483.2 371.6h1.5v1h-1.5zM478.8 413.6h2.5v1h-2.5zM492.0 321.2h1.5v2.5h-1.5zM477.0 403.3h1.5v2.5h-1.5zM506.9 373.2h2.5v3h-2.5zM485.8 305.0h2.5v2.5h-2.5zM475.5 427.9h1v1.5h-1zM466.4 402.0h2v1h-2zM485.1 313.7h1v2h-1zM465.4 398.0h1.5v2.5h-1.5zM487.4 314.6h2v1h-2zM464.4 395.4h1.5v2h-1.5zM485.7 420.8h1.5v2.5h-1.5zM497.9 418.5h2.5v3h-2.5zM496.6 326.8h1.5v1.5h-1.5zM498.4 331.7h2v1h-2zM499.9 404.7h1.5v2.5h-1.5zM477.5 377.5h1.5v2h-1.5zM498.4 339.1h1.5v3h-1.5zM487.6 408.1h2v2.5h-2zM494.7 317.8h1.5v3h-1.5zM500.0 339.6h2v3h-2zM485.5 304.0h2.5v1.5h-2.5zM474.2 434.2h1v2h-1zM497.3 362.2h2v2h-2zM499.9 345.2h2v2.5h-2zM473.9 374.6h2v1h-2zM491.2 325.4h1v3h-1zM488.6 309.9h1v1h-1zM489.2 311.9h2v3h-2zM487.9 374.8h2v2h-2zM479.8 437.2h2v1.5h-2zM504.0 354.3h2v2.5h-2zM479.4 397.0h2v2.5h-2zM500.1 383.0h2.5v1h-2.5zM490.9 349.6h2v1h-2zM478.5 398.0h2v3h-2zM473.6 406.9h2.5v1.5h-2.5zM492.3 395.0h2.5v2h-2.5zM485.6 381.1h1.5v2.5h-1.5z"/><path fill="#42641f" d="M504.9 395.7h1.5v2.5h-1.5zM485.7 322.6h1.5v3h-1.5zM490.5 353.4h1v3h-1zM489.2 306.7h2v2.5h-2zM480.5 334.6h2.5v2.5h-2.5zM491.8 375.0h1.5v1.5h-1.5zM489.4 367.8h2v1.5h-2zM470.4 388.1h1v2.5h-1zM489.5 364.5h1v1h-1zM496.1 334.4h1v3h-1zM494.4 379.9h2v2.5h-2zM491.1 362.2h2v2h-2zM493.4 399.0h2v2.5h-2zM494.7 323.9h1v1.5h-1zM497.9 409.9h1.5v1.5h-1.5zM508.8 418.2h1v3h-1zM470.3 413.9h1v2.5h-1zM476.4 386.8h1.5v2h-1.5zM470.7 375.2h2.5v1.5h-2.5zM475.9 343.7h2v2.5h-2zM488.1 299.4h2.5v1h-2.5zM476.4 353.9h2v2h-2zM481.5 400.7h1.5v1.5h-1.5zM486.5 318.3h2.5v2.5h-2.5zM489.2 323.7h2v1h-2zM485.6 342.8h2v3h-2zM471.4 404.3h2v2h-2zM494.5 352.7h1v3h-1zM481.2 340.5h2.5v1h-2.5zM486.9 318.1h2v2.5h-2zM507.1 382.4h1.5v2.5h-1.5zM484.8 369.3h2.5v2.5h-2.5zM486.6 328.4h1v1h-1zM481.4 401.4h1.5v2h-1.5zM491.7 374.3h1.5v2h-1.5zM482.8 312.9h1.5v1.5h-1.5zM486.0 423.2h2v3h-2zM488.3 358.5h1.5v3h-1.5zM495.2 350.5h2.5v1h-2.5zM474.9 351.5h2v3h-2zM494.0 379.0h1v2h-1zM480.9 336.5h2.5v1h-2.5zM495.6 340.7h2v1h-2zM508.5 382.8h1.5v3h-1.5zM485.7 304.6h2v1h-2zM484.4 314.3h1.5v1h-1.5zM490.0 417.4h1v2h-1zM500.2 420.5h2.5v1.5h-2.5zM486.9 401.3h2v3h-2zM480.0 391.6h1v1h-1zM485.5 374.1h2v3h-2zM483.2 361.0h2.5v1h-2.5zM473.2 377.6h1v2h-1zM480.9 374.6h1.5v1.5h-1.5zM484.2 312.3h1v3h-1zM472.6 359.9h1.5v1h-1.5zM482.3 355.9h2v2h-2zM473.2 432.5h2.5v1.5h-2.5zM492.2 304.7h1v1.5h-1zM481.1 400.8h1.5v2h-1.5zM485.1 305.0h2v2h-2zM480.1 357.1h1.5v1.5h-1.5zM482.8 400.6h1.5v3h-1.5zM495.4 332.4h1.5v1h-1.5zM492.9 312.0h1.5v1.5h-1.5zM489.1 308.9h2.5v1h-2.5zM483.4 318.6h2v1h-2zM483.6 358.6h1.5v2h-1.5zM487.7 303.7h2v3h-2zM486.6 399.2h1.5v1.5h-1.5zM478.9 414.8h2v3h-2zM494.8 360.0h1.5v2.5h-1.5zM486.4 308.8h2.5v1.5h-2.5zM497.3 341.2h2.5v2.5h-2.5zM477.5 367.7h2v1h-2zM478.5 325.1h2v1h-2zM487.1 306.0h2v1h-2zM487.7 362.6h2v1h-2zM508.1 426.6h2.5v2.5h-2.5zM472.8 360.6h1v1.5h-1zM474.6 390.5h2.5v2h-2.5zM492.8 327.8h1.5v3h-1.5zM490.5 301.0h2.5v1h-2.5zM465.9 392.7h1v3h-1zM490.0 300.2h1.5v2h-1.5zM491.6 304.6h1.5v3h-1.5zM488.3 298.8h2v3h-2zM489.6 368.0h2.5v1.5h-2.5zM485.4 315.9h1v1h-1zM487.1 316.4h1.5v2.5h-1.5zM485.9 314.5h1.5v1h-1.5zM504.1 343.7h1v1.5h-1zM482.4 357.3h2.5v1.5h-2.5zM470.8 367.7h2v2h-2zM481.5 368.3h2v1.5h-2zM478.1 386.6h1.5v2.5h-1.5zM466.3 415.1h2.5v2h-2.5zM499.1 417.5h2v2.5h-2zM495.3 385.8h1.5v3h-1.5zM503.1 421.0h2v1h-2zM490.5 383.1h2v1h-2zM495.6 325.1h2v2h-2zM473.7 368.5h2v1h-2zM490.2 363.8h1v2.5h-1zM477.7 407.8h1.5v2.5h-1.5zM488.9 356.1h2.5v2.5h-2.5zM486.5 330.7h2.5v1.5h-2.5zM473.1 351.4h2v3h-2zM488.0 371.5h2.5v1.5h-2.5zM489.7 370.3h2v3h-2zM490.1 310.8h1.5v1.5h-1.5zM490.9 405.5h1v1.5h-1zM502.2 374.8h2v2h-2zM492.1 312.5h2v1h-2zM485.8 333.6h2.5v2.5h-2.5zM483.1 373.4h1v3h-1zM495.6 315.5h2v1.5h-2zM474.6 340.0h2.5v1.5h-2.5zM507.8 423.1h1.5v2h-1.5zM475.1 349.2h1.5v2h-1.5zM486.4 426.4h2v1h-2zM477.1 389.4h1v1.5h-1zM467.6 414.8h2v1h-2zM477.8 384.4h1v2.5h-1zM507.0 399.5h1.5v3h-1.5zM494.1 329.5h2.5v2h-2.5zM488.1 321.2h1v1h-1zM497.5 369.2h1.5v2.5h-1.5zM490.5 376.2h2.5v1.5h-2.5zM477.7 331.6h2v3h-2zM476.3 356.5h1v3h-1zM491.6 327.1h2v1h-2zM490.1 325.4h2v1h-2zM474.3 408.1h2v1h-2zM492.3 415.1h1v2.5h-1zM490.8 304.1h2.5v1.5h-2.5zM489.3 324.5h2v3h-2zM471.5 374.0h2.5v1h-2.5zM484.9 405.0h1.5v1h-1.5zM508.3 403.8h2v1.5h-2zM463.2 406.7h1v1.5h-1zM475.7 345.8h1v2h-1zM486.0 305.1h2v1h-2zM494.7 353.7h1.5v1h-1.5zM481.6 319.1h2v2.5h-2zM480.8 345.2h2v3h-2zM496.1 378.2h2.5v2.5h-2.5zM488.4 420.9h1.5v3h-1.5zM488.6 300.4h2v3h-2zM464.4 429.8h2.5v2.5h-2.5zM470.0 409.4h1v2h-1zM514.0 422.5h1.5v2.5h-1.5zM470.5 378.6h2.5v2.5h-2.5zM480.9 376.0h2v2h-2zM491.5 352.6h2v1.5h-2zM477.2 388.2h2.5v3h-2.5zM476.9 381.3h1v2h-1zM492.6 392.5h1v2.5h-1zM491.0 332.5h1.5v2.5h-1.5zM486.4 424.6h1v1h-1zM495.0 324.0h1v2.5h-1zM473.4 375.9h2v2.5h-2zM499.8 408.6h2.5v2.5h-2.5zM480.9 316.6h2v2h-2zM481.0 373.5h2.5v1h-2.5zM477.8 423.8h2v3h-2zM483.2 389.8h1v1h-1zM500.6 329.5h1.5v1h-1.5zM489.9 338.0h1v1h-1zM510.6 401.2h1.5v1h-1.5zM483.0 346.6h2.5v1.5h-2.5zM473.8 359.1h2.5v2h-2.5zM488.1 314.0h1.5v2h-1.5zM479.2 405.2h2v1h-2zM472.6 431.0h2v1h-2zM489.0 341.1h1.5v2h-1.5zM491.8 306.5h1v1.5h-1zM485.5 373.2h1.5v2.5h-1.5zM481.5 362.8h2.5v1h-2.5zM497.6 409.4h2v3h-2zM479.3 426.3h2v1h-2zM488.9 430.8h1.5v2.5h-1.5zM489.5 327.7h1v3h-1zM479.2 330.5h1v1h-1zM491.1 314.5h1.5v1h-1.5zM469.4 434.1h2v2.5h-2zM489.4 328.1h2.5v1.5h-2.5zM483.6 403.0h2.5v3h-2.5zM495.0 420.3h2.5v2h-2.5zM484.5 322.2h2.5v2h-2.5zM496.4 393.6h1.5v2.5h-1.5zM474.7 416.8h2.5v1.5h-2.5zM486.7 305.1h1.5v2.5h-1.5zM488.9 324.1h2.5v3h-2.5zM490.4 300.1h1v2h-1zM472.7 381.1h1v2.5h-1zM481.1 395.4h2v1.5h-2zM483.4 327.7h2v2h-2zM489.4 401.7h1.5v3h-1.5zM487.7 301.3h2v3h-2zM488.5 321.8h1v2h-1zM487.3 309.0h1v2.5h-1zM480.4 319.4h2v2.5h-2zM473.0 417.5h1.5v3h-1.5zM481.0 425.9h2v1h-2zM489.1 354.6h2v3h-2zM475.1 421.8h2.5v2h-2.5zM471.2 398.1h1.5v2.5h-1.5zM484.1 438.2h1.5v2h-1.5zM487.9 361.5h1.5v1h-1.5zM481.4 323.2h2v3h-2zM475.3 392.9h1.5v1h-1.5zM488.6 381.9h2v1.5h-2zM492.7 396.2h1v3h-1zM492.3 362.8h1.5v1h-1.5zM479.6 361.7h2v2h-2zM487.9 299.4h2v2.5h-2zM480.1 347.6h1.5v1h-1.5zM468.4 408.2h1v2h-1zM487.4 303.4h2v2.5h-2zM482.6 355.5h2v2.5h-2zM488.2 314.9h2.5v1h-2.5zM504.4 390.9h1.5v1.5h-1.5zM490.7 377.7h1.5v2h-1.5zM478.0 380.8h2v1h-2zM491.4 440.4h2v2.5h-2zM462.5 427.1h2v3h-2zM474.2 339.8h2v2h-2zM472.2 373.3h2v2.5h-2zM488.2 335.3h2.5v1h-2.5zM494.9 443.7h1.5v1h-1.5zM481.9 368.4h1v2.5h-1zM501.8 348.4h1.5v2.5h-1.5zM491.6 419.3h2v1h-2zM480.5 337.6h2.5v3h-2.5zM481.4 334.4h2v1h-2zM486.4 308.1h2v1.5h-2zM488.8 321.9h2v3h-2zM480.8 353.8h2.5v2.5h-2.5zM486.6 358.8h1.5v3h-1.5zM494.8 408.8h2.5v3h-2.5zM488.1 399.0h2.5v2h-2.5zM488.6 410.2h2.5v2.5h-2.5zM494.3 354.3h2v2.5h-2zM501.6 378.2h2v3h-2zM487.8 319.4h2v2.5h-2zM477.4 354.2h2v2h-2zM470.5 378.9h2.5v2h-2.5zM478.8 330.8h1.5v2h-1.5zM478.3 370.7h2v3h-2zM495.4 392.1h2v3h-2zM479.4 378.7h2.5v1.5h-2.5zM489.1 303.4h1v1.5h-1zM492.7 315.0h1.5v2.5h-1.5zM489.0 301.1h2v2.5h-2zM473.1 371.9h2v1.5h-2zM486.5 329.2h1.5v1.5h-1.5zM496.8 353.8h2v1.5h-2zM474.3 342.7h2.5v2h-2.5zM484.9 335.7h2v1.5h-2zM473.3 400.0h2v2.5h-2zM494.7 332.9h2.5v3h-2.5zM482.6 333.4h2v1h-2zM471.0 388.7h2v2h-2zM487.0 306.5h1.5v1h-1.5zM471.7 429.0h2.5v1.5h-2.5zM468.2 410.6h2v2h-2zM477.3 353.8h2.5v1h-2.5zM497.1 356.3h2v1h-2zM514.2 416.4h2v2h-2zM486.1 319.5h2v1.5h-2zM496.3 378.6h2v2h-2zM467.0 431.2h2v1h-2zM479.7 323.1h2v1.5h-2zM490.5 369.6h1.5v2.5h-1.5zM467.3 405.3h2.5v1.5h-2.5zM484.2 322.1h2.5v2h-2.5zM499.6 347.6h1.5v2.5h-1.5zM477.3 356.5h2v2h-2zM484.1 361.9h2v3h-2zM487.5 365.6h2v2.5h-2zM479.4 327.1h2v2h-2zM467.1 393.3h1.5v1.5h-1.5zM486.9 349.9h2v1.5h-2zM493.4 313.3h2v1h-2zM478.9 353.1h2.5v1h-2.5zM503.6 356.9h2.5v2.5h-2.5zM489.5 360.4h2.5v1.5h-2.5zM487.5 364.8h2v2.5h-2zM493.0 319.6h2.5v2h-2.5zM473.9 400.9h2v2.5h-2zM494.1 330.4h1.5v1h-1.5zM493.6 316.5h2v2.5h-2zM499.0 337.0h1v1.5h-1zM485.8 336.4h2v3h-2zM498.6 344.3h2v1h-2zM486.3 319.6h1.5v1h-1.5zM480.6 331.0h1v3h-1zM477.1 412.6h2.5v2h-2.5zM467.6 414.9h2v1.5h-2zM488.3 307.4h2v1.5h-2zM467.7 389.0h1v1h-1zM485.9 348.2h2v1h-2zM487.3 307.8h1v2h-1zM493.2 374.1h2v2h-2zM486.7 360.2h1v1h-1zM468.1 410.1h2v1h-2zM486.0 372.2h2v2h-2zM482.5 369.7h2v1h-2zM481.4 398.8h1v3h-1zM488.4 343.8h1v1h-1zM494.9 429.4h2v1.5h-2zM502.5 339.3h1.5v1.5h-1.5zM489.5 331.3h1v1.5h-1zM490.6 300.0h1v1h-1zM472.9 359.3h1.5v2h-1.5zM482.1 332.3h1.5v2.5h-1.5zM483.9 335.8h2v3h-2zM473.8 344.4h2.5v1.5h-2.5zM485.3 326.5h2v3h-2zM490.9 364.6h1v2.5h-1zM482.0 334.7h1.5v2h-1.5zM481.2 365.2h1v1.5h-1zM498.9 399.1h1.5v2.5h-1.5zM487.1 432.7h2.5v2.5h-2.5zM491.4 309.2h1v1.5h-1zM488.2 299.7h2v3h-2zM464.1 428.0h1v2h-1zM478.1 365.7h1.5v3h-1.5zM461.0 415.7h1v1h-1zM484.5 312.1h2.5v2h-2.5zM472.9 416.2h1v2.5h-1zM495.8 385.8h1.5v2h-1.5zM484.8 367.9h2v3h-2zM490.3 352.6h2v1.5h-2zM477.3 345.6h1.5v2h-1.5zM462.5 417.3h2v1.5h-2zM475.6 382.7h1.5v2.5h-1.5zM485.4 347.6h1v3h-1zM484.2 349.5h2v1.5h-2zM481.1 423.0h1v2.5h-1zM486.3 330.7h1.5v2.5h-1.5zM480.1 363.2h1.5v2.5h-1.5zM479.3 353.4h2v1.5h-2zM476.5 416.7h1v2h-1zM470.0 379.6h1v1.5h-1zM483.8 316.1h2.5v2.5h-2.5zM487.0 387.8h1v1.5h-1zM481.1 396.2h2.5v1.5h-2.5zM460.9 416.7h1v2h-1zM482.5 364.4h1v2.5h-1zM484.2 374.6h2v2.5h-2zM494.7 369.2h1.5v1.5h-1.5zM489.1 378.7h2.5v1h-2.5zM495.7 401.4h1v3h-1zM468.1 427.0h1v2.5h-1zM478.0 349.2h2v2.5h-2zM481.9 365.2h2.5v2.5h-2.5zM482.6 311.6h1.5v3h-1.5zM498.9 335.6h2v1.5h-2zM467.7 392.3h2.5v2.5h-2.5zM493.9 318.0h2v2.5h-2zM462.4 405.9h2v1.5h-2zM481.8 377.5h1v2.5h-1zM489.3 365.1h2.5v2h-2.5zM490.5 410.0h2v3h-2zM486.8 352.4h2v2h-2zM476.9 403.9h2v2.5h-2zM491.2 300.6h2v2h-2zM487.6 420.7h1.5v3h-1.5zM496.1 427.4h2.5v2h-2.5zM489.3 365.7h2.5v2h-2.5zM511.7 395.4h2v1h-2zM490.1 300.0h1.5v2h-1.5zM491.0 351.6h2v3h-2zM489.5 307.3h1.5v3h-1.5zM492.0 316.7h2v2h-2zM474.2 386.2h2v3h-2zM480.4 318.5h2v1h-2zM478.2 330.7h2v3h-2zM462.8 416.5h2v1.5h-2zM510.9 407.3h2v1h-2zM480.4 375.8h2v1.5h-2zM499.1 351.7h2v1.5h-2zM484.0 328.2h2v3h-2zM480.2 416.2h2v2.5h-2zM478.9 387.7h2v3h-2zM477.9 348.1h2v2.5h-2zM475.0 379.9h2v2.5h-2zM484.4 328.4h2v1.5h-2zM492.5 359.9h1.5v1h-1.5zM485.6 416.4h2v2.5h-2zM501.8 335.3h1v1.5h-1zM507.7 375.0h2.5v1.5h-2.5zM470.5 428.6h2v2h-2zM494.9 350.9h1.5v2h-1.5zM500.9 431.1h2v1h-2zM485.8 363.9h1.5v1.5h-1.5zM482.6 316.3h2.5v3h-2.5zM486.4 390.1h2v2.5h-2zM475.7 392.3h2.5v1.5h-2.5zM497.1 326.0h2v2h-2zM464.2 414.2h2v2h-2zM516.0 418.9h1v2.5h-1zM488.0 336.1h2v2.5h-2zM484.3 348.5h2v3h-2zM486.3 372.0h2v3h-2zM484.1 356.7h2.5v2h-2.5zM489.2 361.0h1v2h-1zM467.2 413.6h2v2.5h-2zM483.7 327.4h1.5v3h-1.5z"/><path fill="#4f7425" d="M472.0 366.2h1.5v1h-1.5zM486.0 333.6h2v2h-2zM488.0 337.2h2v3h-2zM489.2 300.8h2.5v1.5h-2.5zM492.9 327.8h2v1h-2zM487.9 299.6h2v1h-2zM487.1 318.1h2.5v2h-2.5zM465.0 391.6h2v2.5h-2zM486.7 301.3h1v1.5h-1zM500.5 364.3h1.5v2.5h-1.5zM480.3 361.1h2.5v2h-2.5zM479.3 418.6h1.5v2.5h-1.5zM500.8 370.4h1v2.5h-1zM485.1 345.5h2.5v2h-2.5zM489.0 299.8h1.5v1.5h-1.5zM463.0 416.4h1.5v1h-1.5zM465.8 397.5h2v2.5h-2zM485.1 364.7h1v1.5h-1zM474.4 404.7h2.5v2h-2.5zM461.0 406.5h2v3h-2zM478.0 370.4h2.5v3h-2.5zM488.6 303.0h1v2h-1zM472.3 389.1h1v2.5h-1zM492.1 332.2h2v2.5h-2zM487.7 306.1h2v2h-2zM480.3 372.3h2v1.5h-2zM495.8 352.2h1v1h-1zM478.8 405.3h2v1.5h-2zM476.5 362.6h2.5v1.5h-2.5zM482.2 315.4h2v1h-2zM486.9 311.5h1.5v1.5h-1.5zM486.6 320.2h1.5v2.5h-1.5zM488.0 300.6h2.5v1.5h-2.5zM487.7 299.6h1v3h-1zM495.9 358.6h1.5v2h-1.5zM487.7 362.4h2v3h-2zM496.3 344.0h1.5v2.5h-1.5zM487.9 313.4h2v1.5h-2zM470.1 420.1h2v1h-2zM491.2 319.1h2v2h-2zM486.4 387.3h2v3h-2zM471.9 379.9h2v1h-2zM470.2 397.9h2.5v2h-2.5zM488.8 382.8h2v2h-2zM488.1 301.4h1.5v3h-1.5zM488.5 410.7h1v1h-1zM482.2 358.2h1v1h-1zM481.6 333.5h1.5v2.5h-1.5zM470.3 429.4h2.5v1h-2.5zM487.6 332.2h2v2h-2zM476.8 360.0h2.5v1h-2.5zM491.9 307.5h2v1.5h-2zM484.7 380.8h2v2h-2zM495.9 393.2h1v2.5h-1zM484.4 355.3h1.5v1.5h-1.5zM486.4 366.5h2v1h-2zM467.6 379.6h2v3h-2zM473.4 419.8h2.5v2.5h-2.5zM487.0 299.3h2v2.5h-2zM487.9 365.2h2v3h-2zM488.6 376.5h2v2.5h-2zM497.9 340.9h2v1.5h-2zM487.7 300.9h2v1h-2zM480.7 335.2h1v1h-1zM495.6 350.6h1.5v2h-1.5zM481.9 323.3h2.5v1.5h-2.5zM489.6 365.4h2v3h-2zM480.5 337.6h1.5v2.5h-1.5zM472.5 393.2h1.5v3h-1.5zM478.1 391.4h2v3h-2zM485.0 351.3h1v2h-1zM487.1 319.8h2.5v1.5h-2.5zM479.6 324.8h2v1h-2zM473.4 420.3h2.5v2h-2.5zM487.0 333.8h1.5v2h-1.5zM480.9 429.8h2v1.5h-2zM494.3 315.5h1v3h-1zM487.9 311.0h1.5v2h-1.5zM480.5 329.0h1v1h-1zM475.0 369.0h2v1h-2zM483.3 378.8h2v1h-2zM483.3 342.0h1v1.5h-1zM483.9 368.7h2.5v2h-2.5zM495.3 312.7h2v1.5h-2zM470.7 383.1h1v1h-1zM477.6 377.2h2v2h-2zM485.9 347.7h1v1.5h-1zM494.2 376.0h2v1.5h-2zM485.0 307.3h2.5v1.5h-2.5zM480.5 431.2h2.5v3h-2.5zM472.8 406.0h2v1.5h-2zM461.6 421.1h2.5v1.5h-2.5zM486.8 414.9h2.5v3h-2.5zM482.0 352.3h2v3h-2zM487.9 346.3h1.5v2.5h-1.5zM470.9 366.9h2.5v3h-2.5zM498.1 365.0h2.5v2.5h-2.5zM474.3 353.2h1v2.5h-1zM474.6 368.8h1.5v1.5h-1.5zM476.2 362.9h2v2.5h-2zM480.3 429.1h2.5v3h-2.5zM466.4 399.9h1v1h-1zM481.3 362.8h2.5v1h-2.5zM485.3 394.7h2v1h-2zM486.2 379.0h2.5v1.5h-2.5zM476.0 406.1h2v3h-2zM488.1 355.4h1v2h-1zM486.6 375.8h2v3h-2zM486.9 419.9h2.5v2h-2.5zM485.4 349.2h1.5v1.5h-1.5zM480.0 408.4h2.5v1.5h-2.5zM485.1 376.2h1.5v3h-1.5zM485.6 317.7h2v2h-2zM486.8 302.4h2v2.5h-2zM491.9 302.2h1v2h-1zM493.1 402.4h2v2.5h-2zM494.3 372.2h1.5v3h-1.5zM482.2 321.8h2.5v2.5h-2.5zM498.0 366.9h2.5v2h-2.5zM491.0 344.7h2v1.5h-2zM477.2 384.9h2.5v1h-2.5zM465.7 388.5h2.5v1.5h-2.5zM479.6 386.5h2v2h-2zM479.7 373.7h2.5v2h-2.5zM487.5 428.7h2.5v2.5h-2.5zM498.0 368.3h2v2.5h-2zM473.6 378.1h2v2h-2zM505.4 367.4h2v3h-2zM491.5 337.9h2v1h-2zM492.2 304.2h1v2h-1zM472.6 383.0h2v2h-2zM482.6 313.6h2v1h-2zM481.9 337.4h2v2.5h-2zM476.9 415.9h2v2h-2zM486.1 351.7h1.5v2h-1.5zM480.8 392.0h1.5v1h-1.5zM490.8 424.4h1v2.5h-1zM497.7 339.8h2v2h-2zM488.0 342.9h2v2h-2zM496.9 327.8h1v1.5h-1zM495.6 382.7h2v1h-2zM485.6 342.9h2v2.5h-2zM475.1 358.1h2v3h-2zM474.6 404.3h1v1.5h-1zM485.2 410.9h2v2.5h-2zM475.8 417.9h2v3h-2zM471.2 419.6h1v2h-1zM467.9 388.3h2v3h-2zM474.6 362.3h1.5v3h-1.5zM481.1 319.1h2.5v2.5h-2.5zM489.3 311.8h2v1h-2zM497.1 326.3h1v1.5h-1zM489.1 337.2h2v2.5h-2zM486.6 381.1h2v2h-2zM482.5 324.1h2v3h-2zM481.1 359.3h2v1.5h-2zM474.0 379.3h2v1.5h-2zM478.5 339.2h2v1h-2zM481.5 379.8h1.5v3h-1.5zM470.5 423.7h1v1.5h-1zM486.1 368.0h2.5v2.5h-2.5zM477.3 375.0h1.5v2.5h-1.5zM478.0 348.1h1v2h-1zM485.5 392.5h1v2.5h-1zM477.8 365.3h1v3h-1zM493.9 321.3h2.5v2h-2.5zM475.3 373.7h1v2h-1zM474.3 368.0h2v2.5h-2zM479.8 406.1h2.5v3h-2.5zM493.9 360.3h1v2.5h-1zM475.4 398.2h1.5v2h-1.5zM488.5 316.8h2v1h-2zM482.1 316.3h1v2.5h-1zM474.5 387.8h2v2.5h-2zM484.9 329.7h2v2h-2zM490.5 330.6h2v3h-2zM482.5 361.7h1.5v2.5h-1.5zM487.4 315.5h1v1.5h-1zM486.0 343.4h2.5v2.5h-2.5zM482.9 372.5h1.5v2h-1.5zM481.2 338.7h2.5v2.5h-2.5zM482.4 326.7h2v1h-2zM494.6 334.3h2v2h-2zM493.3 383.8h1.5v1h-1.5zM494.4 315.8h2.5v2.5h-2.5zM476.3 431.0h1.5v1.5h-1.5zM475.9 371.2h1.5v3h-1.5zM495.2 345.8h2v1.5h-2zM480.0 341.4h2v1h-2zM486.9 303.9h2.5v3h-2.5zM467.0 383.1h2.5v1.5h-2.5zM485.5 367.2h2v2.5h-2zM490.9 312.4h1v1h-1zM486.0 302.4h1.5v1.5h-1.5zM503.7 350.6h1.5v2.5h-1.5zM488.2 332.3h2v2h-2zM494.1 312.2h1.5v3h-1.5zM493.2 322.1h2v2h-2zM502.8 340.6h2v1h-2zM498.1 371.7h2.5v2h-2.5zM497.3 413.0h1.5v2h-1.5zM488.5 311.1h1.5v1h-1.5zM489.2 301.2h1.5v3h-1.5zM470.3 392.4h2v2.5h-2zM492.2 362.7h2v1.5h-2zM487.8 380.1h2v1.5h-2zM484.3 344.4h1v3h-1zM471.0 382.7h1v2.5h-1zM479.8 364.4h2.5v1.5h-2.5zM477.8 335.1h1v1.5h-1zM491.4 365.1h2.5v1h-2.5zM486.2 328.7h1v3h-1zM466.3 415.7h2v2h-2zM494.6 313.0h2v1.5h-2zM498.2 362.9h2.5v3h-2.5zM482.4 390.7h1v2h-1zM478.5 340.7h1v2.5h-1zM485.2 305.5h2v1h-2zM483.6 312.8h2.5v2.5h-2.5zM492.2 368.9h1.5v1.5h-1.5zM483.3 347.7h2.5v1h-2.5zM484.3 370.1h2.5v2.5h-2.5zM489.7 348.8h2v3h-2zM479.6 391.7h1.5v2.5h-1.5zM467.1 421.5h2.5v1h-2.5zM487.3 359.9h2v2h-2zM514.8 411.4h2.5v2.5h-2.5zM478.9 414.9h1.5v1.5h-1.5zM481.4 322.6h1v2.5h-1zM467.2 429.9h1v2.5h-1zM507.6 384.3h1v1h-1zM464.7 425.1h1v1.5h-1zM488.2 309.4h2v2h-2zM475.6 349.7h2v1.5h-2zM484.4 328.8h1v2.5h-1zM490.1 338.5h1v1.5h-1zM484.1 312.7h2v1.5h-2zM482.2 381.5h1v3h-1zM485.5 416.2h1v2.5h-1zM484.2 310.5h2v1.5h-2zM490.0 307.3h2v2.5h-2zM475.2 392.2h2.5v1.5h-2.5zM470.5 419.8h1v3h-1zM468.4 424.1h2.5v2.5h-2.5zM479.2 382.5h1v2.5h-1zM496.3 364.0h2.5v2.5h-2.5zM488.1 300.9h2v2h-2zM481.2 322.7h2.5v3h-2.5zM488.2 300.3h2.5v1h-2.5zM476.9 338.4h2.5v2.5h-2.5zM478.3 327.7h1.5v1h-1.5zM485.8 323.7h2v1h-2zM487.7 304.1h2.5v1h-2.5zM470.6 400.7h2v2h-2zM492.2 388.1h1v3h-1zM476.4 364.6h1.5v1h-1.5zM469.8 395.7h2.5v3h-2.5zM466.5 414.3h1.5v2h-1.5zM488.1 299.7h2v2.5h-2zM489.0 378.6h1.5v3h-1.5zM494.4 319.5h1.5v2.5h-1.5zM479.0 434.0h2v2h-2zM471.0 392.9h2.5v1h-2.5zM497.0 340.3h1v2h-1zM488.8 379.2h1v2.5h-1zM474.5 398.4h1.5v1.5h-1.5zM490.3 398.4h1.5v1h-1.5zM479.1 322.4h2.5v2h-2.5zM485.9 303.4h1v3h-1zM498.1 378.0h1.5v3h-1.5zM464.1 404.6h1v2.5h-1zM504.9 398.9h1v2h-1zM503.9 396.9h2.5v1h-2.5zM484.0 328.3h1v3h-1zM493.6 389.2h2v1.5h-2zM500.5 392.8h2v2.5h-2zM494.4 339.7h1v1h-1zM497.2 350.2h1.5v1h-1.5zM492.5 380.4h2.5v3h-2.5zM493.7 326.7h2v1.5h-2zM487.8 404.4h2v2.5h-2zM476.9 402.6h2v2.5h-2zM479.6 381.8h1.5v1h-1.5zM491.7 336.0h2v3h-2zM505.2 397.2h2v1.5h-2zM481.7 368.5h2v1.5h-2zM488.6 314.5h2v1h-2zM494.2 352.6h2v1.5h-2zM463.7 400.9h2v1h-2zM476.7 345.2h1.5v2h-1.5zM461.1 417.0h2.5v3h-2.5zM476.2 335.6h1v2h-1zM480.7 374.9h2v2.5h-2zM491.3 353.6h1.5v2h-1.5zM486.5 319.6h1.5v1h-1.5zM490.3 321.0h2v2h-2zM483.6 320.2h1v2.5h-1zM473.1 389.5h2.5v2.5h-2.5z"/><path fill="#5d832c" d="M479.1 345.4h2.5v1h-2.5zM474.9 418.3h1.5v2.5h-1.5zM476.8 342.1h2v3h-2zM487.1 304.2h1.5v2.5h-1.5zM479.4 382.2h2v1h-2zM473.9 407.4h1v3h-1zM491.2 319.7h2v2.5h-2zM480.9 331.2h1v2h-1zM466.0 393.6h1.5v2.5h-1.5zM486.7 384.2h2v1.5h-2zM483.9 357.2h2.5v1.5h-2.5zM484.9 304.2h2v1.5h-2zM490.0 324.2h2v2h-2zM477.7 341.4h1.5v2.5h-1.5zM488.0 300.8h2v1.5h-2zM487.8 372.0h2v1.5h-2zM488.4 306.9h1.5v2.5h-1.5zM477.5 347.5h2v2.5h-2zM491.5 328.6h2v3h-2zM466.3 389.5h2.5v2.5h-2.5zM487.5 385.7h1.5v3h-1.5zM485.6 314.1h2.5v1h-2.5zM479.7 343.4h1v2h-1zM473.2 418.3h2v1h-2zM484.7 314.0h2v1h-2zM487.0 348.5h1v3h-1zM487.2 303.4h2v1h-2zM473.4 377.1h1v2.5h-1zM483.6 334.2h2.5v1h-2.5zM464.6 395.9h2.5v2h-2.5zM485.9 303.2h1v1h-1zM483.2 340.2h1v1.5h-1zM481.6 347.1h2.5v1h-2.5zM472.9 389.6h1.5v3h-1.5zM491.4 311.1h2v2h-2zM481.9 322.7h1.5v1.5h-1.5zM489.9 302.4h2v2.5h-2zM488.4 299.0h2.5v2.5h-2.5zM487.9 304.3h2v1h-2zM487.3 359.3h2.5v1h-2.5zM471.5 403.9h2v2h-2zM462.8 398.7h2v3h-2zM492.7 316.9h2.5v1.5h-2.5zM468.8 435.5h2.5v2.5h-2.5zM488.7 307.4h1.5v1h-1.5zM478.2 368.4h2v1h-2zM479.2 348.4h1.5v3h-1.5zM491.0 300.5h1v3h-1zM478.7 388.5h2v1.5h-2zM491.0 341.7h2v1h-2zM492.5 397.5h1v2.5h-1zM483.4 374.5h1.5v1.5h-1.5zM495.7 393.6h1.5v1.5h-1.5zM491.7 305.5h2v1h-2zM487.3 298.7h2v2.5h-2zM491.3 316.3h2v1h-2zM491.6 425.5h2v3h-2zM486.1 325.6h2.5v2.5h-2.5zM483.1 408.4h2v2h-2zM493.1 346.3h1v2.5h-1zM468.9 403.3h2v1h-2zM475.5 339.9h2v3h-2zM492.6 309.0h2.5v1h-2.5zM472.2 421.4h1v2h-1zM476.2 357.7h2v1.5h-2zM479.6 373.9h2v1h-2zM485.3 385.8h2v2h-2zM482.2 361.0h1v3h-1zM487.1 400.2h2v1h-2zM486.2 344.0h2v3h-2zM472.1 376.8h2v2.5h-2zM487.3 312.1h1.5v2h-1.5zM486.3 368.7h1v2.5h-1zM494.9 372.2h1v1h-1zM490.7 371.2h2v2.5h-2zM482.6 318.5h1v2.5h-1zM486.3 343.1h2v1.5h-2zM501.3 337.1h2v3h-2zM489.8 341.3h1v2.5h-1zM477.5 415.9h2v3h-2zM480.0 425.8h1.5v3h-1.5zM489.9 303.0h2v1h-2zM485.3 307.4h1.5v1.5h-1.5zM472.1 397.5h1v2h-1zM477.2 338.1h2v1.5h-2zM484.7 308.5h1.5v2h-1.5zM475.7 390.3h2v2h-2zM478.8 336.1h1.5v3h-1.5zM489.4 315.4h2v1h-2zM463.7 396.8h1v2h-1zM493.3 321.6h1v2h-1zM492.5 401.3h1v3h-1zM490.2 422.5h2.5v3h-2.5zM488.6 351.6h2v3h-2zM480.5 365.6h2v2h-2zM482.3 420.7h1v1.5h-1zM491.4 351.0h2.5v1.5h-2.5zM480.6 317.2h2v1.5h-2zM466.8 421.0h1.5v1.5h-1.5zM487.2 347.5h2v1.5h-2zM495.5 367.7h2.5v3h-2.5zM487.9 308.5h2v1.5h-2zM482.4 365.4h1v1h-1zM461.1 422.4h2.5v1.5h-2.5zM488.2 302.0h1.5v2.5h-1.5zM486.7 336.7h1v1h-1zM488.2 316.2h1v2.5h-1zM472.7 372.8h1.5v1.5h-1.5zM481.1 355.9h1.5v1h-1.5zM480.9 325.0h2v3h-2zM488.4 315.6h2v2.5h-2zM486.2 328.6h2v2h-2zM487.9 335.3h2v3h-2zM496.9 316.6h2v2.5h-2zM487.2 302.0h2v1.5h-2zM495.6 383.1h1v2.5h-1zM478.2 339.4h1v1.5h-1zM481.6 334.2h2v1h-2zM494.4 357.6h2.5v3h-2.5zM493.7 426.1h2v2h-2zM486.2 306.4h2v2.5h-2zM490.1 372.2h2v2.5h-2zM488.8 309.6h2v1.5h-2zM468.4 388.2h1.5v1.5h-1.5zM485.7 340.3h1v1h-1zM496.1 387.2h2v2h-2zM483.7 344.6h1v1.5h-1zM484.5 394.8h2v2h-2zM502.2 358.1h1.5v2h-1.5zM485.9 327.8h2v1.5h-2zM494.9 413.4h2.5v1h-2.5zM479.9 350.4h2v2h-2zM480.8 343.0h2.5v3h-2.5zM475.7 375.3h2.5v3h-2.5zM486.6 313.7h1.5v1.5h-1.5zM473.7 392.7h2v2.5h-2zM477.8 328.9h1v3h-1zM497.8 376.9h1v2.5h-1zM466.1 418.4h2v3h-2zM488.0 388.7h1.5v1h-1.5zM495.9 370.9h1v1.5h-1zM486.4 366.1h1v1h-1zM475.3 388.5h1v1h-1zM460.6 406.7h2v1.5h-2zM488.9 429.4h1.5v1h-1.5zM491.8 362.2h2v1h-2zM482.0 424.5h2v2.5h-2zM482.2 341.7h2.5v2.5h-2.5zM485.8 329.6h2v2.5h-2zM470.4 373.4h1v1h-1zM486.3 343.9h1.5v1h-1.5zM501.0 413.7h1v2.5h-1zM488.3 379.2h1.5v1.5h-1.5zM485.8 330.0h1v2.5h-1zM475.4 350.4h1.5v1.5h-1.5zM491.4 395.9h1.5v3h-1.5zM477.2 336.7h1.5v3h-1.5zM487.6 319.1h1v2h-1zM485.9 334.1h2v2h-2zM486.0 320.3h1v3h-1zM483.3 333.2h1v2h-1zM470.1 376.9h1v1h-1zM493.7 323.4h1.5v1.5h-1.5zM500.5 351.4h2v1h-2zM462.3 404.2h1.5v1h-1.5zM472.4 421.3h1.5v3h-1.5zM474.9 368.0h2.5v3h-2.5zM499.9 376.9h1.5v2.5h-1.5zM479.6 377.0h2v2h-2zM487.0 310.3h2v1h-2zM479.8 326.2h2v1h-2zM463.5 416.8h2v1h-2zM489.5 369.6h2v2h-2zM482.9 401.2h2.5v2.5h-2.5z"/><path fill="#6f9335" d="M477.7 342.5h2.5v3h-2.5zM470.9 415.0h1.5v1h-1.5zM477.7 335.7h2v3h-2zM468.0 389.0h2v2.5h-2zM488.5 402.0h2v2h-2zM478.8 370.1h1v1.5h-1zM487.0 317.8h2.5v3h-2.5zM489.4 309.2h1.5v1h-1.5zM485.8 314.0h2v1h-2zM479.4 376.2h1v1.5h-1zM484.2 307.8h2v1.5h-2zM492.5 433.7h1v2.5h-1zM461.7 402.9h2.5v2h-2.5zM465.4 427.0h1v2.5h-1zM462.5 411.8h1.5v1.5h-1.5zM489.2 336.0h1v2.5h-1zM488.2 303.7h1.5v2.5h-1.5zM489.1 306.7h1.5v1.5h-1.5zM480.2 325.4h2.5v3h-2.5zM484.4 371.8h1.5v1h-1.5zM486.8 342.7h2.5v2h-2.5zM466.0 409.4h2v2h-2zM493.2 352.3h2v2.5h-2zM485.6 351.3h2.5v1.5h-2.5zM493.0 322.8h1v2h-1zM474.7 372.9h2.5v3h-2.5zM489.1 323.2h2v1h-2zM488.2 353.5h2v1.5h-2zM488.6 327.2h2v2h-2zM488.5 415.5h2v3h-2zM484.9 355.2h2v2h-2zM488.1 322.1h2.5v2h-2.5zM472.5 364.6h2.5v3h-2.5zM494.2 369.0h2v1h-2zM476.6 388.5h2v1.5h-2zM482.5 318.1h1.5v2.5h-1.5zM478.9 345.0h2v2.5h-2zM489.1 373.3h2v2h-2zM490.4 352.0h1v1h-1zM482.4 313.6h1v1.5h-1zM473.4 372.0h1v2.5h-1zM475.4 351.2h2v1h-2zM486.9 309.2h2v1.5h-2zM488.8 299.9h2.5v2h-2.5zM483.6 308.1h2.5v2h-2.5zM485.4 306.8h2.5v3h-2.5zM488.0 417.1h2v1h-2zM489.6 431.0h1v1h-1zM487.3 373.3h2v1.5h-2zM485.1 311.7h1.5v2.5h-1.5zM482.0 319.0h2v1h-2zM466.3 390.6h2.5v3h-2.5zM493.5 424.6h2v3h-2zM492.6 362.9h2v3h-2zM486.4 336.6h2.5v2h-2.5zM494.4 337.2h2.5v2h-2.5zM488.0 301.4h1.5v1.5h-1.5zM480.2 374.0h1v1.5h-1zM502.1 348.1h2v1h-2zM473.9 374.5h2v1.5h-2zM483.1 316.1h1v2h-1zM500.9 366.5h2.5v1h-2.5zM488.3 308.0h2v1.5h-2zM478.8 325.8h2.5v3h-2.5zM482.7 339.4h2v3h-2zM488.5 325.7h1v2.5h-1zM488.7 299.1h1v2.5h-1zM502.0 360.0h1.5v1h-1.5zM488.4 302.6h1.5v1h-1.5zM477.8 333.1h2v3h-2zM494.5 362.6h2v1.5h-2zM484.0 396.4h2v1h-2zM483.5 308.4h2v3h-2zM492.4 380.8h2v2.5h-2zM476.7 422.6h2v2h-2zM490.9 363.1h2v2h-2zM483.7 321.3h2v1.5h-2zM494.6 391.6h1.5v2.5h-1.5zM482.7 333.0h1v2.5h-1zM474.3 342.9h1.5v1.5h-1.5zM481.5 421.2h1v2h-1zM481.2 328.1h2v2h-2zM473.0 414.9h2.5v2h-2.5zM464.8 407.0h2v2h-2z"/><path fill="#85a545" d="M470.7 369.3h2.5v3h-2.5zM478.6 381.1h2v3h-2zM498.4 357.9h1.5v2h-1.5zM478.4 377.5h1v2h-1zM474.1 361.3h2.5v1.5h-2.5zM487.6 307.1h2v3h-2zM489.3 308.1h1v1.5h-1zM483.5 314.5h1v2.5h-1zM474.5 413.6h2v3h-2zM474.1 342.7h1.5v2h-1.5zM484.3 319.9h2v1.5h-2zM476.7 353.5h2v1.5h-2zM471.7 372.0h1.5v2.5h-1.5zM487.6 300.1h2v2h-2zM488.7 302.0h2v1h-2zM469.2 405.3h1.5v1.5h-1.5zM475.5 355.1h1v2h-1zM485.9 305.9h1v3h-1zM486.6 385.1h2v2.5h-2zM469.0 408.3h1v2.5h-1zM479.8 330.5h2v2h-2zM480.8 403.0h1.5v1h-1.5zM486.7 303.3h2v1h-2zM481.6 343.8h1.5v1.5h-1.5zM488.9 299.5h1v1h-1zM485.0 355.2h2v1.5h-2zM484.0 352.0h2v1.5h-2zM475.5 338.5h1.5v1h-1.5zM487.7 406.4h2v2.5h-2zM483.8 368.0h1v1h-1zM478.3 393.4h2v2.5h-2zM481.7 319.5h1v1h-1zM481.1 403.4h1.5v3h-1.5zM474.9 375.1h2v1.5h-2zM493.7 390.6h2v2.5h-2zM478.2 370.6h2.5v1h-2.5zM485.9 303.3h1v1.5h-1zM476.4 334.6h2v2h-2zM465.6 420.3h2v1h-2zM490.0 323.6h2v1.5h-2zM486.3 333.1h1.5v2.5h-1.5zM462.6 424.4h2.5v2h-2.5zM465.9 410.8h2.5v2.5h-2.5zM473.9 354.9h2.5v2.5h-2.5z"/></g>
<g shape-rendering="crispEdges"><path d="M188 447.5 L540 447.5" stroke="#f00" stroke-width="1" stroke-dasharray="3 3" fill="none"/></g>
<path d="M193 444.7 L540 271.2" stroke="#000" stroke-width="1.1" stroke-dasharray="3.354 3.354" fill="none"/>
<g stroke="#000" stroke-width="1" fill="none">
<path d="M193.5 435 L193.5 459"/>
<path d="M193.5 435 Q188.5 439 188.5 447 Q189 454 193.5 459"/>
<path d="M193.5 435 L203 447.5 L193.5 459"/>
</g>
<g shape-rendering="crispEdges">
<rect x="631" y="213" width="1" height="106" fill="#000"/>
<rect x="568" y="318" width="128" height="1" fill="#000"/>
<rect x="631" y="319" width="1" height="19" fill="#f00"/>
<rect x="614" y="326" width="35" height="1" fill="#000"/>
</g>
<defs><clipPath id="cp"><rect x="562" y="194" width="138" height="144"/></clipPath></defs>
<g clip-path="url(#cp)" stroke="#000" stroke-width="1.1" fill="none">
<path d="M614.3 326.5 L623.5 319 Q631.5 316.5 639.5 319 L648.7 326.5"/>
<path d="M614.3 326.5 L631.5 340.4 L648.7 326.5"/>
</g>
<g shape-rendering="crispEdges">
<rect x="631" y="430" width="1" height="28" fill="#000"/>
<rect x="641" y="409" width="1" height="43" fill="#000"/>
<rect x="655" y="429" width="7" height="3" fill="#000"/>
<rect x="631" y="430" width="66" height="1" fill="#f00"/>
</g>
<g stroke="#000" stroke-width="1.1" fill="none">
<path d="M641.5 409 Q631.5 415 631.5 430 Q632 445 641.5 451.5"/>
<path d="M641.5 409 L657 429.5 M641.5 451.5 L657 431.5"/>
</g>
</svg>

<!-- tabs -->
<div class="tab" style="left:3px;width:53px"></div>
<div class="a" style="left:3px;top:502px;width:1px;height:1px;background:#f0f0f0"></div><div class="a" style="left:55px;top:502px;width:1px;height:1px;background:#f0f0f0"></div><div class="a" style="left:54px;top:501px;width:1px;height:1px;background:#696969"></div>
<div class="tab" style="left:56px;width:49px"></div>
<div class="a" style="left:56px;top:502px;width:1px;height:1px;background:#f0f0f0"></div><div class="a" style="left:104px;top:502px;width:1px;height:1px;background:#f0f0f0"></div><div class="a" style="left:103px;top:501px;width:1px;height:1px;background:#696969"></div>
<div class="tab" style="left:105px;width:62px"></div>
<div class="a" style="left:105px;top:502px;width:1px;height:1px;background:#f0f0f0"></div><div class="a" style="left:166px;top:502px;width:1px;height:1px;background:#f0f0f0"></div><div class="a" style="left:165px;top:501px;width:1px;height:1px;background:#696969"></div>
<div class="tab" style="left:168px;width:71px"></div>
<div class="a" style="left:168px;top:502px;width:1px;height:1px;background:#f0f0f0"></div><div class="a" style="left:238px;top:502px;width:1px;height:1px;background:#f0f0f0"></div><div class="a" style="left:237px;top:501px;width:1px;height:1px;background:#696969"></div>
<div class="tab" style="left:239px;width:51px"></div>
<div class="a" style="left:239px;top:502px;width:1px;height:1px;background:#f0f0f0"></div><div class="a" style="left:289px;top:502px;width:1px;height:1px;background:#f0f0f0"></div><div class="a" style="left:288px;top:501px;width:1px;height:1px;background:#696969"></div>
<div class="tab" style="left:291px;width:50px"></div>
<div class="a" style="left:291px;top:502px;width:1px;height:1px;background:#f0f0f0"></div><div class="a" style="left:340px;top:502px;width:1px;height:1px;background:#f0f0f0"></div><div class="a" style="left:339px;top:501px;width:1px;height:1px;background:#696969"></div>
<div class="tab" style="left:342px;width:57px"></div>
<div class="a" style="left:342px;top:502px;width:1px;height:1px;background:#f0f0f0"></div><div class="a" style="left:398px;top:502px;width:1px;height:1px;background:#f0f0f0"></div><div class="a" style="left:397px;top:501px;width:1px;height:1px;background:#696969"></div>
<div class="tab" style="left:399px;width:47px"></div>
<div class="a" style="left:399px;top:502px;width:1px;height:1px;background:#f0f0f0"></div><div class="a" style="left:445px;top:502px;width:1px;height:1px;background:#f0f0f0"></div><div class="a" style="left:444px;top:501px;width:1px;height:1px;background:#696969"></div>
<div class="tab" style="left:499px;width:43px"></div>
<div class="a" style="left:499px;top:502px;width:1px;height:1px;background:#f0f0f0"></div><div class="a" style="left:541px;top:502px;width:1px;height:1px;background:#f0f0f0"></div><div class="a" style="left:540px;top:501px;width:1px;height:1px;background:#696969"></div>
<div class="a" style="left:444px;top:483px;width:57px;height:22px;box-sizing:border-box;background:#f0f0f0;border-left:2px solid #fff;border-right:1px solid #696969;border-bottom:1px solid #696969;box-shadow:inset -1px -1px 0 #a0a0a0"></div>

<div style="position:absolute;left:0;top:0;width:709px;height:506px;transform:translateZ(0);will-change:transform"><span class="t" style="left:15.2px;top:54px;transform:scaleX(0.868)">Satellites (0)</span>
<span class="t" style="left:164.0px;top:54px;transform:scaleX(0.888)">Obstacle Calculator</span>
<span class="t" style="left:576.8px;top:54px;transform:scaleX(0.898)">Observed Data</span>
<span class="t" style="left:161.9px;top:74px;transform:scaleX(0.874)">Obstacle Height (m):</span>
<span class="t" style="left:162.1px;top:98px;transform:scaleX(0.875)">Obstacle Distance (m):</span>
<span class="t" style="left:162.1px;top:122px;transform:scaleX(0.863)">Dish Height (m):</span>
<span class="t" style="left:162.1px;top:147px;transform:scaleX(0.874)">Heigt Difference (m):</span>
<span class="t" style="left:162.1px;top:165px;transform:scaleX(0.859)">Satellite Visible:</span>
<span class="t" style="left:278.1px;top:72px;transform:scaleX(0.979)">11.0</span>
<span class="t" style="left:278.1px;top:96px;transform:scaleX(0.942)">20.0</span>
<span class="t" style="left:278.7px;top:120px;transform:scaleX(0.923)">1.0</span>
<span class="t" style="left:276.4px;top:147px;transform:scaleX(0.920)">10.0</span>
<span class="t" style="left:276.2px;top:165px;transform:scaleX(0.952)">No</span>
<span class="t" style="left:362.1px;top:74px;transform:scaleX(0.876)">Obstacle Shadow (m):</span>
<span class="t" style="left:362.1px;top:98px;transform:scaleX(0.885)">Shadow at Sun Pass:</span>
<span class="t" style="left:362.1px;top:147px;transform:scaleX(0.893)">Lowest Elevation:</span>
<span class="t" style="left:362.1px;top:165px;transform:scaleX(0.893)">Elevation Difference:</span>
<span class="t" style="left:478.2px;top:72px;transform:scaleX(0.908)">2898.03</span>
<span class="t" style="left:476.3px;top:147px;transform:scaleX(0.898)">26.565°</span>
<span class="t" style="left:476.5px;top:165px;transform:scaleX(0.879)">-26.565°</span>
<span class="t" style="left:574.9px;top:70px;transform:scaleX(0.857)">Azimuth:</span>
<span class="t" style="left:574.9px;top:86px;transform:scaleX(0.886)">Elevation:</span>
<span class="t" style="left:574.9px;top:102px;transform:scaleX(0.879)">Sun Pass:</span>
<span class="t" style="left:574.9px;top:118px;transform:scaleX(0.895)">Declination:</span>
<span class="t" style="left:574.9px;top:134px;transform:scaleX(0.884)">Pol. Angle:</span>
<span class="t" style="left:574.9px;top:150px;transform:scaleX(0.894)">Hour Angle:</span>
<span class="t" style="left:574.9px;top:166px;transform:scaleX(0.899)">Sun Elev:</span>
<span class="t" style="left:639.4px;top:70px;transform:scaleX(0.875)">180.000° E</span>
<span class="t" style="left:639.4px;top:86px;transform:scaleX(0.893)">0.000°</span>
<span class="t" style="left:639.4px;top:102px;transform:scaleX(1.025)">-</span>
<span class="t" style="left:639.4px;top:118px;transform:scaleX(0.893)">0.000°</span>
<span class="t" style="left:639.4px;top:134px;transform:scaleX(0.893)">0.000°</span>
<span class="t" style="left:639.4px;top:150px;transform:scaleX(0.893)">0.000°</span>
<span class="t" style="left:639.4px;top:166px;transform:scaleX(0.893)">0.217°</span>
<span class="t" style="left:617.1px;top:197px;transform:scaleX(0.922)">South</span>
<span class="t" style="left:567.9px;top:316px;transform:scaleX(0.924)">East</span>
<span class="t" style="left:670.1px;top:316px;transform:scaleX(0.940)">West</span>
<span class="t" style="left:566.1px;top:349px;transform:scaleX(0.891)">Mount:  Azimuthal</span>
<span class="t" style="left:35.2px;top:400px;transform:scaleX(0.896)">Real Time</span>
<span class="t" style="left:20.7px;top:427px;transform:scaleX(0.894)">22- 1 -2026</span>
<span class="t" style="left:20.7px;top:451px;transform:scaleX(0.929)">17:00:46</span>
<span class="t" style="left:8.8px;top:484px;transform:scaleX(0.928)">Location</span>
<span class="t" style="left:62.1px;top:484px;transform:scaleX(0.916)">Sat Info</span>
<span class="t" style="left:111.3px;top:484px;transform:scaleX(0.883)">Clarke Belt</span>
<span class="t" style="left:174.0px;top:484px;transform:scaleX(0.892)">Ground Map</span>
<span class="t" style="left:245.1px;top:484px;transform:scaleX(0.902)">Sun Dial</span>
<span class="t" style="left:296.9px;top:484px;transform:scaleX(0.928)">HA Map</span>
<span class="t" style="left:348.1px;top:484px;transform:scaleX(0.913)">Elev Map</span>
<span class="t" style="left:405.0px;top:484px;transform:scaleX(0.904)">Sat List</span>
<span class="t" style="left:451.9px;top:486px;transform:scaleX(0.904)">Obstacle</span>
<span class="t" style="left:506.5px;top:484px;transform:scaleX(0.939)">Tools</span></div>
</body></html>
